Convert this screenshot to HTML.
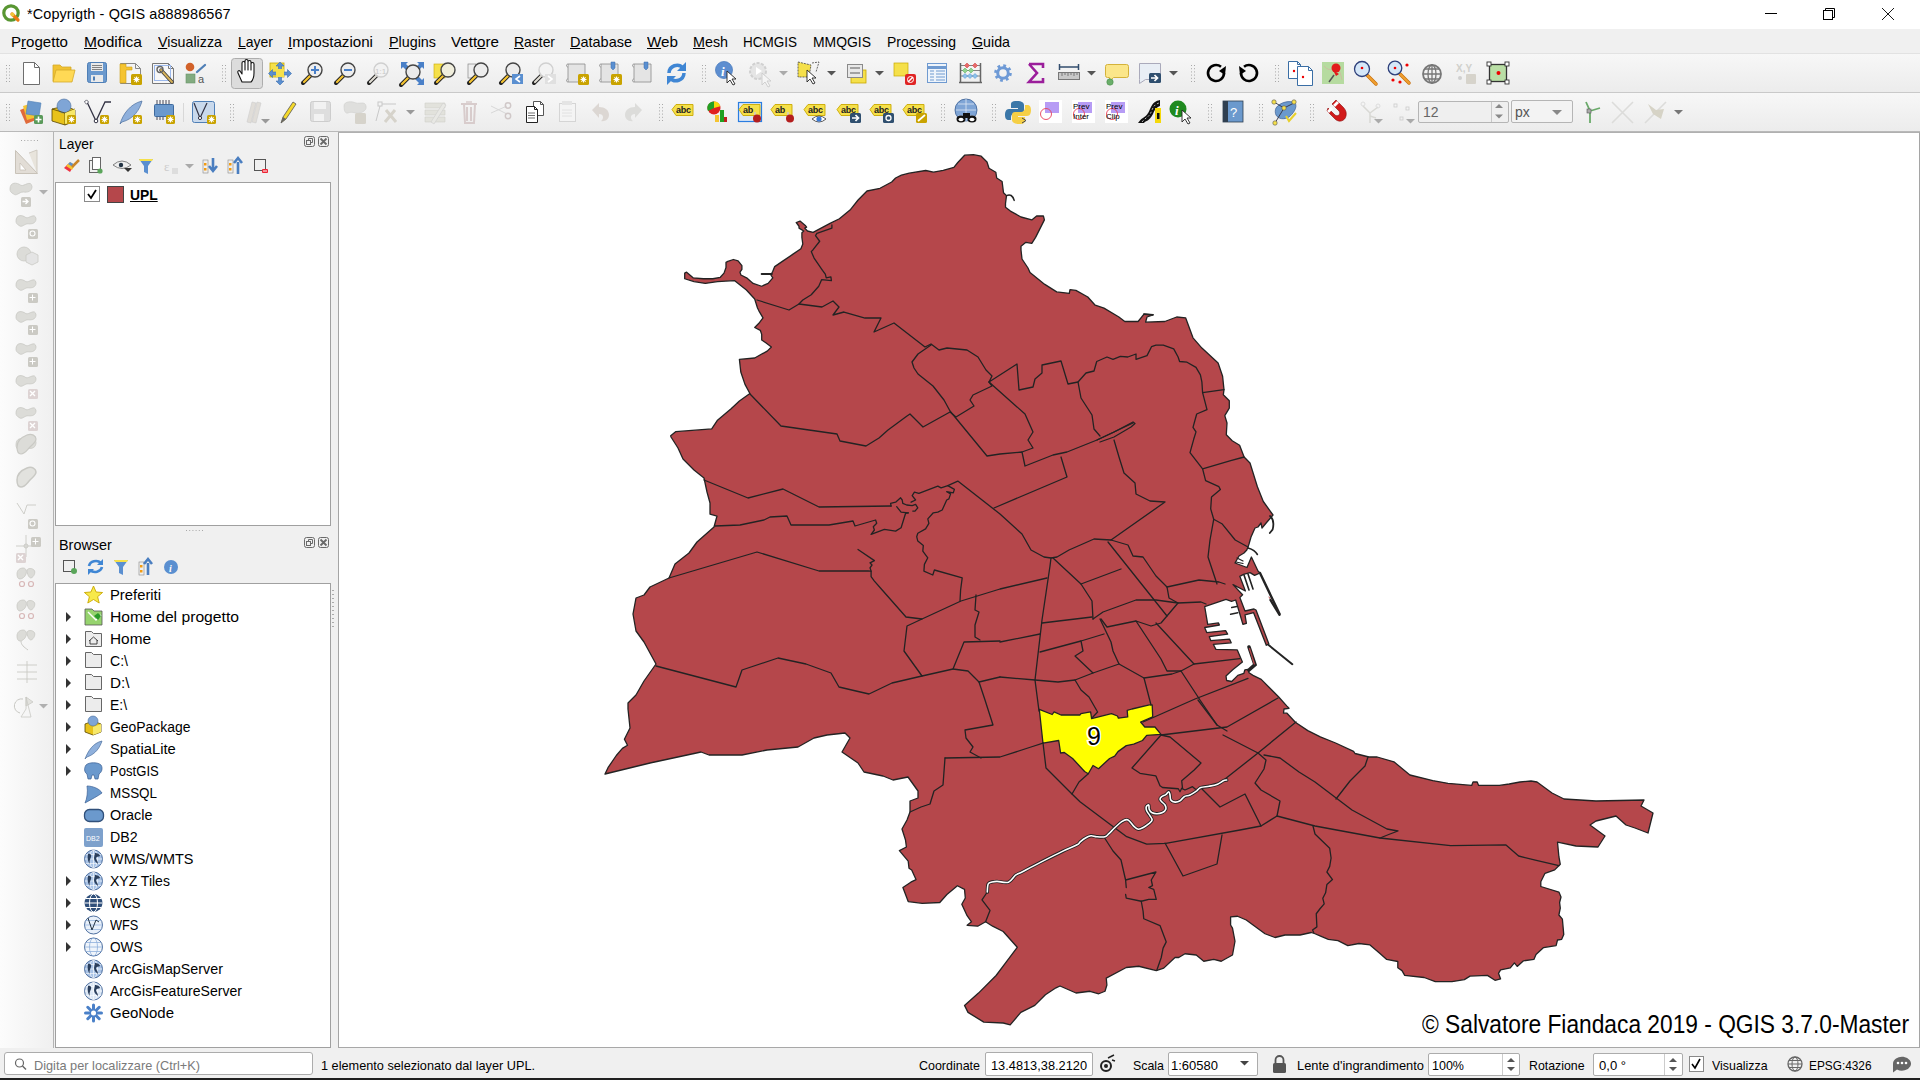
<!DOCTYPE html>
<html><head><meta charset="utf-8">
<style>
*{margin:0;padding:0;box-sizing:border-box}
html,body{width:1920px;height:1080px;overflow:hidden;background:#f0f0f0;font-family:"Liberation Sans",sans-serif;color:#000}
.abs{position:absolute}
#title{position:absolute;left:0;top:0;width:1920px;height:29px;background:#fff}
#title .t{position:absolute;left:27px;top:5px;font-size:15px;color:#000;letter-spacing:0.1px}
#menubar{position:absolute;left:0;top:29px;width:1920px;height:24px;background:#f0f0f0}
.mi{position:absolute;top:33px;font-size:15px;white-space:nowrap}
.tb{position:absolute;left:0;width:1920px;background:linear-gradient(#f7f7f7,#ececec)}
#tb1{top:53px;height:39px;border-top:1px solid #e2e2e2}
#tb2{top:92px;height:40px;border-top:1px solid #c9c9c9;border-bottom:1px solid #b9b9b9}
#ltb{position:absolute;left:0;top:132px;width:52px;height:916px;background:linear-gradient(90deg,#fcfcfc,#f0f0f0)}
#vsep{position:absolute;left:53px;top:132px;width:1px;height:916px;background:#b4b4b4}
#canvas{position:absolute;left:338px;top:132px;width:1582px;height:916px;background:#fff;border-left:1px solid #a5a5a5;border-right:1px solid #a5a5a5;border-top:1px solid #b0b0b0;border-bottom:1px solid #a8a8a8}
.map{position:absolute;left:0;top:0}
.dtitle{position:absolute;font-size:15px}
.tree{position:absolute;background:#fff;border:1px solid #a0a0a0}
.ti{position:absolute;font-size:15px;white-space:nowrap}
#status{position:absolute;left:0;top:1048px;width:1920px;height:30px;background:#f0f0f0}
#taskbar{position:absolute;left:0;top:1078px;width:1920px;height:2px;background:#202020}
.st{position:absolute;font-size:13.5px;white-space:nowrap;top:1057px}
.inp{position:absolute;background:#fff;border:1px solid #acacac;border-radius:2px}
.copy{position:absolute;left:1422px;top:1010px;font-size:25px;white-space:nowrap}
</style></head><body>
<div id="title"><div class="t" style="transform:scaleX(0.9642);transform-origin:0 0">*Copyrigth - QGIS a888986567</div></div>
<div id="menubar"></div>
<div class="tb" id="tb1"></div>
<div class="tb" id="tb2"></div>
<div id="ltb"></div>
<div id="vsep"></div>
<div id="canvas"><svg class="map" width="1581" height="915" viewBox="339 133 1581 915">
<polygon points="684.7,273.1 686.6,272.2 693.1,277.8 703.4,278.75 712.8,278.75 720.3,277.3 724,273.1 726,267.5 726,262.3 727.8,261.4 733.4,259.5 738.1,260.9 741.9,265.6 741.9,269.4 740,272.2 740.9,275 746.6,277.8 753.1,283.4 761.6,286.25 768.1,283.4 772.8,277.8 770.9,275 772.8,271.25 774.7,266.6 783.1,260.9 793.4,253.9 800.9,248.75 802.8,244 801.9,237.5 801.9,232.8 803.75,231 799,228.1 799,226.25 796.25,222.5 800,221.1 805.6,225.8 806.6,227.2 804.7,228.1 807.5,231 813.1,232.3 830,223.4 839.4,218.75 850.6,209.4 858.1,200 867,191 880,188.3 891.7,182 895.6,178 901.4,175.2 909.2,173.2 925.7,170.5 933.5,172.2 943.2,170.3 953.9,167.4 957.8,162.5 964.6,155.2 973.4,154.7 981.2,156.2 987,162 989,168.3 995.8,172.2 996.7,178 1002.1,181.5 1003.5,192.7 1006.5,195.6 1005.5,203.4 1005.5,207.3 1010.4,211.1 1021,217 1031.8,219.9 1036.6,216 1043.4,216 1044.4,219.9 1035.6,237.4 1031.8,243.3 1025.9,242.3 1021,246.2 1021,250 1022,259 1028,268 1030,272.6 1044.8,284.4 1056.7,291.9 1069.3,293.3 1070,289.6 1075.9,290.4 1087.8,297 1095.2,305.2 1104,308.1 1118.9,317 1124.8,321.5 1138.1,321.5 1144,314.1 1153,314.8 1147,317 1145.6,322.2 1164.8,321.5 1176.7,317 1185.6,317.8 1193,337.8 1201.9,348.1 1218.1,363 1222.6,376.3 1224,389.6 1223.3,394.8 1229.3,400.7 1229.3,408.1 1224.8,415.6 1227,423 1226.3,434.8 1232.2,440.7 1239.6,445.2 1244.1,457 1250,463 1257.4,486.7 1263.3,501.5 1273,515 1267,522 1262,528 1261,523 1258,527 1255,528 1251,537 1249,544 1248,547 1246.8,550 1244,553 1239,556 1235,563 1247,567.5 1251.4,557 1258,571 1260,573 1254.6,575.4 1250,572.6 1243.5,574.4 1239.8,576.3 1245.4,591 1233,584.6 1242.6,594.8 1239.8,597.6 1240.8,600 1245,611 1254,609 1256,610 1268.8,643.8 1266.3,645.3 1253.6,612.7 1245,614.8 1246.4,623.4 1242.9,624.4 1235.7,600 1231.5,601.3 1226,599.4 1204.7,606.6 1207.7,624.4 1218.4,622.9 1219.4,625 1204.7,627.5 1206.7,632.6 1225.6,630.6 1227.6,634.1 1209.3,636.7 1210.8,640.7 1229.6,639.2 1231.2,642.8 1213.3,644.3 1215.9,649.4 1237.3,649.9 1242.4,662.1 1232.7,669.8 1226,675.9 1226.6,680.5 1231.7,681.5 1237.8,675.4 1243.9,673.3 1244.9,669.8 1248,669.3 1249,672.8 1253,675.4 1261.2,679.4 1278.5,696.8 1286.7,705.9 1289,708.3 1284,709 1283.5,713.2 1287,713.2 1295.3,722.2 1307.8,730.6 1320.3,736.8 1335.6,743 1353.6,751.4 1355,753.5 1368.9,757 1377.2,757 1393.9,761.8 1409.9,775 1432.8,780.6 1448,783.3 1471.7,785.4 1473,782 1477.2,782 1478.6,785.4 1499.4,785.4 1509.2,784 1520,782 1531,781 1537,782 1552,793 1564,799 1596,801 1644,800 1641,806 1653,813 1648,833 1635,828 1626,825 1616,816 1596,821 1590,825 1605,836 1598,847 1576,846 1557.5,842.1 1558.9,856.7 1560.3,864.3 1554.7,869.9 1545,873.3 1540.8,881.7 1540.8,886.5 1558.9,892.1 1561,897 1559.6,902.5 1560.3,908 1558.9,915 1562.4,919.2 1563.75,934.4 1561.7,939.3 1557.5,940 1556.1,945.6 1543.6,947.6 1536,954.6 1533.9,959.4 1523.5,960.8 1517.2,966.4 1514.4,962.9 1510.3,967.8 1500.6,969.9 1498.5,973.3 1500.6,978.9 1495,980.3 1487.4,975.4 1470,976.1 1464.4,979.6 1452,981.7 1435.3,981.7 1424.2,977.5 1404.7,975.4 1402,970.6 1397.8,967.8 1397.8,961.5 1386.7,959.4 1379.7,953.2 1370,944.9 1358.9,943.5 1347.8,945.6 1338,940.7 1328.3,939.3 1320,935.8 1315,933.75 1311.25,932.5 1300,935 1285,935 1275,937.5 1265,933.75 1246.25,920 1237.5,916.25 1230.6,916.9 1230.6,925 1232.5,928.1 1235,941.25 1232.5,955 1221.25,961.25 1213.75,959.4 1203.75,961.25 1196.25,955 1185,953.75 1178.75,957.5 1175,957.5 1163.75,968.1 1156.25,970.6 1138.75,966.25 1126.25,967.5 1106.25,978.1 1106.9,985 1105,991.25 1098.75,993.75 1090,991.25 1076,993 1060,986 1056,987.8 1045.4,994.8 1034.8,1005.4 1020.8,1012.4 1010.2,1024.8 1003.2,1023 983.8,1022.1 968,1012.4 964.5,1005.4 978.5,993.1 996.1,975.5 1006.7,961.4 1017.25,947.3 1003.2,931.5 992.6,926.2 985.6,921.8 977.7,926.2 967.1,925.3 971.5,921.8 967.1,915.7 961.8,904.2 965.3,898 964.5,889.3 957.4,885.75 946.9,894.5 939.8,902.5 922.2,903.3 908.2,901.6 902.9,887.5 910.8,882.2 916,879.6 911.7,870 909,868.2 908.2,861.1 899.4,850.6 906.4,847 905.5,840 902,829 907,820 910,812 910,801 918,798 918,791 908,777 893,780 883,776 864,772 858,763 842,752 850,738 845,733 827,735 814,738 798,747 767,750 742,755 709,755 701,752 650,763 605,774 608,767.7 616.3,755.5 622.4,748.4 627.5,745.3 624.4,739.2 630,728 628,709 628,703 636,695 644,681 656,664 644,642 636,631 633,614 636,598 644,595 650,587 669,578 675,564 689,553 697,542 714,527 717,516 710,514 710,503 707,492 704,478 694,470 683,459 678,448 671,437 670.7,435.8 675.6,431.7 711.7,428.9 717.2,420.6 731.1,408.75 739.4,401 749.9,393.5 745,384.4 740.8,372 739.4,359.4 754.7,358 767.2,351.1 771.4,347 765.8,342.8 761.7,340 761.7,334.4 760.3,330.3 754.7,327.5 758.9,323.3 763,317.8 758.9,310.8 757.5,308 754.7,299 746.4,290 734.4,280.6 717.5,281.6 705.3,283.4 694,281.6 684.7,278.75" fill="#b5474b" stroke="#232323" stroke-width="1.3" stroke-linejoin="round"/>
<polygon points="1039.3,709.4 1052.2,714.5 1054.1,711.8 1061,715 1080,715 1080.9,713.6 1090.6,711.8 1091.6,718.7 1111.5,713.6 1117.5,716 1118.4,718.2 1127.7,716.9 1127.2,710.4 1131.9,709 1149.4,704.8 1152.2,704.8 1152.7,716.9 1140.6,722 1144.8,727 1155,727 1161,734.4 1146.7,735.4 1142.5,740.5 1133.7,744.2 1126.3,745.6 1118,751.6 1114.7,756.2 1109.6,758.5 1098.5,768.7 1093,765.5 1088.3,773.8 1084.6,771.5 1072.6,758.5 1064.3,752.5 1060.6,753 1058.7,740.5 1043,743.2" fill="#ffff00" stroke="#232323" stroke-width="1.3" stroke-linejoin="round"/>
<g fill="none" stroke="#232323" stroke-width="1.3" stroke-linejoin="round" stroke-linecap="round">
<path d="M757,300 L789,310 L799,304 L802.8,300 L811.25,294.7 L818.75,286.25 L821.6,279.7 L831.4,280.6 L830.9,276.9 L826.25,277.8 L825.3,274.1 L822.5,270.3 L814.1,258.1 L811.25,251.6 L813.1,249.7 L819.7,241.25 L815.5,235.6 L816.9,233.3 L831.9,228.1 L831.9,224.8"/>
<path d="M799,304 L822,307 L833,301 L839,307 L833,315 L844,312 L865,318 L881,318 L874,332 L894,323 L925,347 L931,344 L939,350 L947,348 L967,350 L978,357 L986,370 L992,376 L989,382 L1017,364 L1019,390 L1033,387 L1035,379 L1042,373 L1042,365 L1061,361 L1068,384 L1078,382 L1086,373 L1094,371 L1096.7,361.5 L1107,357 L1113,359.3 L1120.4,356.3 L1127.8,357 L1136,354 L1136,359.3 L1147,355.6 L1151.5,346.7 L1156,345.2 L1163.3,345.2 L1173.7,348.9 L1178.1,357 L1179.6,361.5 L1187,362.2 L1196,367.4 L1200.4,374.8 L1201.9,382.2 L1202.6,392.6 L1207,409.6 L1196.7,414 L1193,427.4 L1196,431.9 L1193.7,439.3 L1190,452.6 L1202.6,468.9 L1205.6,480.7 L1218.9,486.7 L1220.4,489.6 L1211.5,497 L1210.7,508.9 L1213.7,519.3 L1210,540 L1208,557 L1217,584"/>
<path d="M1202.6,392.6 L1224,389.6"/>
<path d="M1202.6,468.9 L1230.7,460.7 L1244.1,457"/>
<path d="M1213.7,519.3 L1221.9,523.7 L1235.2,540 L1248,547"/>
<path d="M750,394 L781,426 L837,434 L840,441 L866,446 L879,438 L888,430 L907,416 L910,414 L923,427 L950,412 L956,417 L974,406 L970,400 L973,395 L992,386 L989,382"/>
<path d="M989,382 L1025,414 L1033,432 L1028,440 L1033,448 L1022,452"/>
<path d="M931,345 L918,354 L912,362 L914,368 L918,374 L933,386 L944,400 L950,411 L987,456 L1000,454 L1022,452 L1025,466 L1053,455 L1067,452 L1097,440 L1114,432 L1133,423"/>
<path d="M1097,440 L1114,432 L1133,422 L1135,423.5 L1131,427 L1114,437 L1100,442"/>
<path d="M1114,440 L1119,457 L1124,473 L1135,483 L1136,494 L1150,501 L1165,502 L1111,540"/>
<path d="M1051,558 L1057,557 L1069,550 L1094,539 L1111,540 L1128,545 L1133,556 L1143,557 L1156,576 L1167,587 L1169,598 L1178,603 L1201,602 L1206,604"/>
<path d="M1053,558 L1081,584 L1092,601 L1093,619"/>
<path d="M1108,542 L1167,616"/>
<path d="M1167,587 L1199,580 L1219,582 L1225,584"/>
<path d="M1061,457 L1067,477 L994,508"/>
<path d="M1081,584 L1121,569"/>
<path d="M1093,619 L1103,612 L1136,600 L1156,600 L1178,603 L1161,623 L1151,626 L1136,621 L1107,627 L1101,619"/>
<path d="M1042,623 L1092,617"/>
<path d="M1000,642 L1040,634"/>
<path d="M1040,652 L1081,641 L1104,634"/>
<path d="M1100,619 L1111,642 L1113,651 L1119,664 L1144,678 L1151,705"/>
<path d="M1081,641 L1083,651 L1075,656 L1093,673 L1119,664"/>
<path d="M1136,621 L1161,659 L1167,671 L1181,671 L1194,664 L1239.8,658.6"/>
<path d="M1156,623 L1194,664"/>
<path d="M1000,677 L1035,680 L1058,682 L1075,680 L1093,673"/>
<path d="M1075,680 L1081,690 L1089,697 L1097.6,712 L1092,718"/>
<path d="M1144,678 L1172,674 L1181,671"/>
<path d="M1181,671 L1200,700 L1217,725 L1227,731"/>
<path d="M1248,678.4 L1195,699 L1143,722"/>
<path d="M1278,698 L1227,727 L1161,735"/>
<path d="M1078,382 L1081,398 L1092,415 L1094,429 L1100,436"/>
<path d="M704,480 L748,498 L783,489 L819,507 L891,506"/>
<path d="M715,526 L740,525 L764,520 L770,517 L787,516 L791,525 L829,525 L853,521 L855,526 L875.6,520 L876.7,523.3 L873.3,526.7 L874.4,530 L871.1,534.4 L884.4,529.4 L895.6,531.1 L901.1,527.8 L905.6,513.3 L908.3,512.8"/>
<path d="M891.1,506.1 L890.6,503.3 L895.6,502.2 L900.6,497.8 L902.2,500 L902.8,503.3 L906.7,505 L912.2,505.6 L915.6,504.4 L917.8,507.8 L915,511.1 L912.8,511.1"/>
<path d="M896.7,506.7 L901.1,512.2 L908.3,512.8"/>
<path d="M911.1,502.2 L915.6,500 L912.2,495.6 L914.4,492.2 L918.9,493.3 L937.8,486.1 L941.1,487.8 L947.8,485.6 L954.4,489.4 L953.3,492.8 L946.7,491.7 L950.6,493.9 L948.9,498.9 L946.7,500 L942.2,510 L937.8,512.2 L933.3,512.8 L927.8,518.9 L928.9,523.3 L925.6,528.9 L917.8,533.3 L916.7,536.7 L917.8,541.1 L923.3,545.6 L922.8,551.1 L927.8,557.8 L924.4,564.4 L923.9,571.1 L932.8,575 L934.4,570 L962.2,577.8 L960.6,590 L960,601"/>
<path d="M947.8,485.6 L957.8,481.1 L1000,514 L1022,534 L1031,550 L1044,557 L1051,558 L1050,566 L1042,620 L1035,680 L1039,711"/>
<path d="M669,578 L757,552 L819,571 L868,571 L871.1,571.1 L871.1,576.7 L874.4,581.1 L882.2,590 L906,617 L922,619 L961,601 L1000,589 L1047,578"/>
<path d="M858,549.5 L874.4,560.6 L870,562.8 L872,565 L870,567.8 L871.1,571.1"/>
<path d="M922,619 L907,626 L904,651 L922,676 L953,669 L964,642 L1000,641"/>
<path d="M976,595 L975,610 L979,612 L975,625 L975,637 L980,640"/>
<path d="M656,666 L736,687 L742,670 L778,658 L806,664 L831,673 L839,687 L856,691 L869,694 L892,683 L922,676"/>
<path d="M953,669 L968,671 L979,682 L1000,677"/>
<path d="M979,682 L985,700 L993,725 L965,730 L966,738 L973,747 L970,752 L981,758"/>
<path d="M945,758 L1000,757 L1031,747 L1043,743.2"/>
<path d="M945,758 L943,785 L934,791 L930,804 L921,807 L910,812"/>
<path d="M1043,743 L1046,768 L1072,794 L1080,801.7 L1113.3,826.7 L1126.7,836.7 L1146.7,844.2 L1165.8,843.3 L1240,830 L1261,826 L1277,816 L1315,826 L1380,838 L1450.6,845.6 L1506,844.9 L1518.6,856 L1535.3,860.1 L1558.9,865.7"/>
<path d="M1072,794 L1079,782 L1088,774"/>
<path d="M1161,735 L1170,737 L1201,763 L1194.2,770 L1181.7,780.8 L1182.5,788.3"/>
<path d="M1161,735 L1132,768 L1140,773.3 L1155.8,775.8 L1160,785.8 L1162.5,787.5 L1178.3,788.75 L1180,791.7 L1181.7,788.3 L1185,790 L1192.5,786.7 L1195.8,789.6 L1201,788"/>
<path d="M1198,700 L1217,725"/>
<path d="M1223,735 L1258,753 L1266,760 L1264,769 L1255,783 L1261,790 L1280,801 L1277,816"/>
<path d="M1296,722 L1258,753 L1225,779"/>
<path d="M1264,755 L1280,758 L1299,772 L1315,782 L1352,810 L1387,829 L1398,831 L1390,834 L1380,838"/>
<path d="M1368,757 L1365,766 L1350,781 L1336,799"/>
<path d="M1201,788 L1220,807 L1245,794 L1261,826"/>
<path d="M1313,826 L1315,834 L1329.7,848.3 L1331.1,858 L1329.7,866.4 L1326.9,872 L1332.5,879.6 L1326.9,884.4 L1325.6,892.8 L1322.8,898.3 L1324.2,903.9 L1320,908.75 L1316.25,913.75 L1316.9,926.9 L1312.5,930 L1313.75,932.5"/>
<path d="M1104,837 L1113,851 L1121,860 L1125.6,880 L1126.25,887.5"/>
<path d="M1125.6,894.4 L1126.25,898.1 L1141.25,901.25 L1148.75,899.4 L1156.25,899.4 L1153.75,889.4 L1148.75,887.5 L1152.5,885.6 L1151.25,880 L1156,872 L1125.6,880"/>
<path d="M1141.25,901.25 L1143.1,911.25 L1143.75,918.75 L1160,925.6 L1166.25,941.9 L1163.1,948.1 L1161.25,957.5 L1156.9,970"/>
<path d="M987.3,892 L982,899.8 L990,910.4 L985.6,921.8"/>
<path d="M1165,843 L1183,876 L1217,864 L1222,835"/>
</g>
<path d="M987.3,892 C987.4,890.7 987.4,885.7 988.2,884 C989.0,882.3 990.5,882.4 992,882 C993.5,881.6 994.2,881.4 997,881.4 C999.8,881.4 1005.4,883.2 1008.5,882.2 C1011.6,881.2 1013.2,877.0 1015.5,875.2 C1017.8,873.5 1018.3,873.9 1022.5,871.7 C1026.7,869.5 1034.2,865.5 1040.9,862.1 C1047.6,858.7 1056.9,854.0 1062.9,851.1 C1068.9,848.2 1074.2,846.3 1077.1,844.8 C1079.9,843.3 1078.7,843.2 1080,842.1 C1081.3,841.0 1083.2,839.3 1085,838.3 C1086.8,837.2 1088.8,836.1 1090.8,835.8 C1092.8,835.5 1094.3,836.6 1096.7,836.7 C1099.1,836.9 1102.9,837.3 1105,836.7 C1107.1,836.1 1107.5,834.8 1109.2,833.3 C1110.9,831.8 1112.9,829.4 1115,827.5 C1117.1,825.6 1119.8,823.0 1121.7,821.7 C1123.7,820.4 1125.3,819.6 1126.7,819.6 C1128.1,819.6 1128.8,820.5 1130,821.7 C1131.2,822.9 1132.8,825.5 1134.2,826.7 C1135.6,828.0 1136.8,829.1 1138.3,829.2 C1139.8,829.3 1141.5,828.5 1143.3,827.5 C1145.1,826.5 1147.7,824.5 1149.2,823.3 C1150.7,822.0 1152.0,821.2 1152.1,820 C1152.2,818.8 1150.9,817.3 1150,815.8 C1149.1,814.3 1147.3,812.3 1146.7,810.8 C1146.1,809.3 1146.0,807.7 1146.3,806.7 C1146.6,805.7 1148.3,804.6 1148.8,805 C1149.3,805.4 1148.7,808.0 1149.2,809.2 C1149.7,810.5 1150.5,811.7 1151.7,812.5 C1153.0,813.3 1154.9,813.8 1156.7,813.75 C1158.5,813.8 1161.0,813.3 1162.5,812.5 C1164.0,811.7 1165.4,810.5 1165.8,809.2 C1166.2,808.0 1165.7,806.2 1165,805 C1164.3,803.8 1162.5,802.7 1161.7,801.7 C1160.9,800.7 1160.0,800.0 1160,799.2 C1160.0,798.4 1160.7,797.5 1161.7,796.7 C1162.7,795.9 1164.6,795.4 1165.8,794.6 C1167.0,793.8 1168.0,791.6 1168.75,791.7 C1169.5,791.8 1169.7,793.6 1170,795 C1170.3,796.4 1170.0,798.8 1170.8,800 C1171.6,801.2 1173.5,802.0 1175,802.1 C1176.5,802.2 1178.5,801.7 1180,800.8 C1181.5,799.9 1182.5,797.7 1184.2,796.7 C1185.9,795.7 1187.9,796.0 1190,795 C1192.1,794.0 1194.9,792.0 1196.7,790.8 C1198.5,789.5 1198.7,788.3 1200.8,787.5 C1202.9,786.7 1206.4,786.8 1209.2,786.25 C1212.0,785.7 1215.2,785.1 1217.5,784.2 C1219.8,783.3 1221.8,781.5 1223.3,780.8 C1224.8,780.1 1226.1,780.1 1226.7,780" fill="none" stroke="#232323" stroke-width="3.4" stroke-linejoin="round" stroke-linecap="round"/>
<path d="M987.3,892 C987.4,890.7 987.4,885.7 988.2,884 C989.0,882.3 990.5,882.4 992,882 C993.5,881.6 994.2,881.4 997,881.4 C999.8,881.4 1005.4,883.2 1008.5,882.2 C1011.6,881.2 1013.2,877.0 1015.5,875.2 C1017.8,873.5 1018.3,873.9 1022.5,871.7 C1026.7,869.5 1034.2,865.5 1040.9,862.1 C1047.6,858.7 1056.9,854.0 1062.9,851.1 C1068.9,848.2 1074.2,846.3 1077.1,844.8 C1079.9,843.3 1078.7,843.2 1080,842.1 C1081.3,841.0 1083.2,839.3 1085,838.3 C1086.8,837.2 1088.8,836.1 1090.8,835.8 C1092.8,835.5 1094.3,836.6 1096.7,836.7 C1099.1,836.9 1102.9,837.3 1105,836.7 C1107.1,836.1 1107.5,834.8 1109.2,833.3 C1110.9,831.8 1112.9,829.4 1115,827.5 C1117.1,825.6 1119.8,823.0 1121.7,821.7 C1123.7,820.4 1125.3,819.6 1126.7,819.6 C1128.1,819.6 1128.8,820.5 1130,821.7 C1131.2,822.9 1132.8,825.5 1134.2,826.7 C1135.6,828.0 1136.8,829.1 1138.3,829.2 C1139.8,829.3 1141.5,828.5 1143.3,827.5 C1145.1,826.5 1147.7,824.5 1149.2,823.3 C1150.7,822.0 1152.0,821.2 1152.1,820 C1152.2,818.8 1150.9,817.3 1150,815.8 C1149.1,814.3 1147.3,812.3 1146.7,810.8 C1146.1,809.3 1146.0,807.7 1146.3,806.7 C1146.6,805.7 1148.3,804.6 1148.8,805 C1149.3,805.4 1148.7,808.0 1149.2,809.2 C1149.7,810.5 1150.5,811.7 1151.7,812.5 C1153.0,813.3 1154.9,813.8 1156.7,813.75 C1158.5,813.8 1161.0,813.3 1162.5,812.5 C1164.0,811.7 1165.4,810.5 1165.8,809.2 C1166.2,808.0 1165.7,806.2 1165,805 C1164.3,803.8 1162.5,802.7 1161.7,801.7 C1160.9,800.7 1160.0,800.0 1160,799.2 C1160.0,798.4 1160.7,797.5 1161.7,796.7 C1162.7,795.9 1164.6,795.4 1165.8,794.6 C1167.0,793.8 1168.0,791.6 1168.75,791.7 C1169.5,791.8 1169.7,793.6 1170,795 C1170.3,796.4 1170.0,798.8 1170.8,800 C1171.6,801.2 1173.5,802.0 1175,802.1 C1176.5,802.2 1178.5,801.7 1180,800.8 C1181.5,799.9 1182.5,797.7 1184.2,796.7 C1185.9,795.7 1187.9,796.0 1190,795 C1192.1,794.0 1194.9,792.0 1196.7,790.8 C1198.5,789.5 1198.7,788.3 1200.8,787.5 C1202.9,786.7 1206.4,786.8 1209.2,786.25 C1212.0,785.7 1215.2,785.1 1217.5,784.2 C1219.8,783.3 1221.8,781.5 1223.3,780.8 C1224.8,780.1 1226.1,780.1 1226.7,780" fill="none" stroke="#ffffff" stroke-width="1.6" stroke-linejoin="round" stroke-linecap="round"/>
<g fill="none" stroke-linecap="round">
<path d="M1249,647 L1255,664.7 L1249,670" stroke="#232323" stroke-width="3.6"/>
<path d="M1249.5,648.5 L1254.3,664" stroke="#b5474b" stroke-width="1.3"/>
<path d="M1268.3,644.8 L1292.3,664.2" stroke="#232323" stroke-width="2"/>
<path d="M1260,573 L1279.6,614" stroke="#232323" stroke-width="2.4"/>
<path d="M1269,597 L1278.8,613" stroke="#b5474b" stroke-width="0.9"/>
<path d="M1270.4,600 L1279.5,614.8" stroke="#232323" stroke-width="2.2"/>
<path d="M1244,575 L1249,590 M1248,574 L1253,589" stroke="#232323" stroke-width="1.6"/>
<path d="M1231.7,607.6 L1236.8,606.6 M1230.6,614.3 L1237.8,612.7" stroke="#232323" stroke-width="1.5"/>
<path d="M1237,558 L1243,561 M1236,562 L1243,563.5" stroke="#232323" stroke-width="1.2"/>
<path d="M1248,548 Q1255,550 1257.4,554.5" stroke="#232323" stroke-width="1.6"/>
<path d="M1006.5,195.6 Q1012,193 1014.2,200.4" stroke="#232323" stroke-width="1.5"/>
<path d="M761.6,274 L771.9,274" stroke="#232323" stroke-width="1.8"/>
<path d="M1144,314.1 L1153,314.8" stroke="#232323" stroke-width="1.8"/>
<path d="M1270,516 Q1275,520 1272.6,529.6 L1269.8,533" stroke="#232323" stroke-width="1.8"/>
</g>
<text x="1094" y="745" font-family="Liberation Sans, sans-serif" font-size="25" text-anchor="middle" fill="#000" stroke="#fff" stroke-width="3" paint-order="stroke">9</text>
</svg></div>
<div class="copy" style="transform:scaleX(0.9097);transform-origin:0 0">© Salvatore Fiandaca 2019 - QGIS 3.7.0-Master</div>
<div id="status"></div>
<div id="taskbar"></div>
<div class="mi" style="left:11px;transform:scaleX(1.005);transform-origin:0 0">P<u>r</u>ogetto</div><div class="mi" style="left:84px;transform:scaleX(1.038);transform-origin:0 0"><u>M</u>odifica</div><div class="mi" style="left:158px;transform:scaleX(0.951);transform-origin:0 0"><u>V</u>isualizza</div><div class="mi" style="left:238px;transform:scaleX(0.933);transform-origin:0 0"><u>L</u>ayer</div><div class="mi" style="left:288px;transform:scaleX(1.009);transform-origin:0 0"><u>I</u>mpostazioni</div><div class="mi" style="left:389px;transform:scaleX(0.955);transform-origin:0 0"><u>P</u>lugins</div><div class="mi" style="left:451px;transform:scaleX(1.010);transform-origin:0 0">Vett<u>o</u>re</div><div class="mi" style="left:514px;transform:scaleX(0.928);transform-origin:0 0"><u>R</u>aster</div><div class="mi" style="left:570px;transform:scaleX(0.965);transform-origin:0 0"><u>D</u>atabase</div><div class="mi" style="left:647px;transform:scaleX(1.014);transform-origin:0 0"><u>W</u>eb</div><div class="mi" style="left:693px;transform:scaleX(0.954);transform-origin:0 0"><u>M</u>esh</div><div class="mi" style="left:743px;transform:scaleX(0.900);transform-origin:0 0">HCMGIS</div><div class="mi" style="left:813px;transform:scaleX(0.928);transform-origin:0 0">MMQGIS</div><div class="mi" style="left:887px;transform:scaleX(0.930);transform-origin:0 0">Pro<u>c</u>essing</div><div class="mi" style="left:972px;transform:scaleX(0.949);transform-origin:0 0"><u>G</u>uida</div>

<div class="tree" style="left:55px;top:182px;width:276px;height:344px"></div>
<div class="tree" style="left:55px;top:583px;width:276px;height:465px"></div>
<div class="abs" style="left:332px;top:590px;width:2px;height:40px;background:repeating-linear-gradient(#aaa 0 1px,transparent 1px 4px)"></div>
<div class="abs" style="left:110px;top:585.5px;font-size:15.5px;white-space:pre;color:#000;transform:scaleX(0.9549);transform-origin:0 0;">Preferiti</div><div class="abs" style="left:110px;top:607.5px;font-size:15.5px;white-space:pre;color:#000;transform:scaleX(1.0115);transform-origin:0 0;">Home del progetto</div><div class="abs" style="left:110px;top:629.5px;font-size:15.5px;white-space:pre;color:#000;transform:scaleX(0.9913);transform-origin:0 0;">Home</div><div class="abs" style="left:110px;top:651.5px;font-size:15.5px;white-space:pre;color:#000;transform:scaleX(0.9085);transform-origin:0 0;">C:\</div><div class="abs" style="left:110px;top:673.5px;font-size:15.5px;white-space:pre;color:#000;transform:scaleX(0.9842);transform-origin:0 0;">D:\</div><div class="abs" style="left:110px;top:695.5px;font-size:15.5px;white-space:pre;color:#000;transform:scaleX(0.8969);transform-origin:0 0;">E:\</div><div class="abs" style="left:110px;top:717.5px;font-size:15.5px;white-space:pre;color:#000;transform:scaleX(0.8982);transform-origin:0 0;">GeoPackage</div><div class="abs" style="left:110px;top:739.5px;font-size:15.5px;white-space:pre;color:#000;transform:scaleX(0.9535);transform-origin:0 0;">SpatiaLite</div><div class="abs" style="left:110px;top:761.5px;font-size:15.5px;white-space:pre;color:#000;transform:scaleX(0.8446);transform-origin:0 0;">PostGIS</div><div class="abs" style="left:110px;top:783.5px;font-size:15.5px;white-space:pre;color:#000;transform:scaleX(0.8661);transform-origin:0 0;">MSSQL</div><div class="abs" style="left:110px;top:805.5px;font-size:15.5px;white-space:pre;color:#000;transform:scaleX(0.9287);transform-origin:0 0;">Oracle</div><div class="abs" style="left:110px;top:827.5px;font-size:15.5px;white-space:pre;color:#000;transform:scaleX(0.9152);transform-origin:0 0;">DB2</div><div class="abs" style="left:110px;top:849.5px;font-size:15.5px;white-space:pre;color:#000;transform:scaleX(0.9325);transform-origin:0 0;">WMS/WMTS</div><div class="abs" style="left:110px;top:871.5px;font-size:15.5px;white-space:pre;color:#000;transform:scaleX(0.9031);transform-origin:0 0;">XYZ Tiles</div><div class="abs" style="left:110px;top:893.5px;font-size:15.5px;white-space:pre;color:#000;transform:scaleX(0.8377);transform-origin:0 0;">WCS</div><div class="abs" style="left:110px;top:915.5px;font-size:15.5px;white-space:pre;color:#000;transform:scaleX(0.8247);transform-origin:0 0;">WFS</div><div class="abs" style="left:110px;top:937.5px;font-size:15.5px;white-space:pre;color:#000;transform:scaleX(0.8776);transform-origin:0 0;">OWS</div><div class="abs" style="left:110px;top:959.5px;font-size:15.5px;white-space:pre;color:#000;transform:scaleX(0.9239);transform-origin:0 0;">ArcGisMapServer</div><div class="abs" style="left:110px;top:981.5px;font-size:15.5px;white-space:pre;color:#000;transform:scaleX(0.9067);transform-origin:0 0;">ArcGisFeatureServer</div><div class="abs" style="left:110px;top:1003.5px;font-size:15.5px;white-space:pre;color:#000;transform:scaleX(0.9644);transform-origin:0 0;">GeoNode</div><div class="abs" style="left:59.3px;top:134.5px;font-size:15px;white-space:pre;color:#000;transform:scaleX(0.9219);transform-origin:0 0;">Layer</div><div class="abs" style="left:59px;top:535.5px;font-size:15px;white-space:pre;color:#000;transform:scaleX(0.9588);transform-origin:0 0;">Browser</div><div class="abs" style="left:130.2px;top:185.5px;font-size:15px;white-space:pre;color:#000;font-weight:bold;transform:scaleX(0.9233);transform-origin:0 0;text-decoration:underline">UPL</div>

<div class="inp" style="left:4px;top:1052px;width:309px;height:23px;border-radius:3px"></div>
<div class="inp" style="left:985px;top:1052px;width:108px;height:24px"></div>
<div class="inp" style="left:1168px;top:1052px;width:90px;height:24px"></div>
<div class="inp" style="left:1428px;top:1053px;width:92px;height:23px"></div>
<div class="abs" style="left:1502px;top:1054px;width:1px;height:21px;background:#ccc"></div>
<div class="inp" style="left:1593px;top:1053px;width:90px;height:23px"></div>
<div class="abs" style="left:1664px;top:1054px;width:1px;height:21px;background:#ccc"></div>
<div class="inp" style="left:1418px;top:101px;width:91px;height:22px;background:#efefef;border-color:#b5b5b5"></div>
<div class="abs" style="left:1491px;top:102px;width:1px;height:20px;background:#c8c8c8"></div>
<div class="inp" style="left:1511px;top:100px;width:62px;height:23px;background:#f3f3f3;border-color:#b5b5b5"></div>
<div class="abs" style="left:33.5px;top:1058px;font-size:13.5px;white-space:pre;color:#7a7a7a;transform:scaleX(0.9435);transform-origin:0 0;">Digita per localizzare (Ctrl+K)</div><div class="abs" style="left:321px;top:1058px;font-size:13.5px;white-space:pre;color:#000;transform:scaleX(0.9411);transform-origin:0 0;">1 elemento selezionato dal layer UPL.</div><div class="abs" style="left:919px;top:1058px;font-size:13.5px;white-space:pre;color:#000;transform:scaleX(0.9236);transform-origin:0 0;">Coordinate</div><div class="abs" style="left:991px;top:1058px;font-size:13.5px;white-space:pre;color:#000;transform:scaleX(0.9471);transform-origin:0 0;">13.4813,38.2120</div><div class="abs" style="left:1133px;top:1058px;font-size:13.5px;white-space:pre;color:#000;transform:scaleX(0.9177);transform-origin:0 0;">Scala</div><div class="abs" style="left:1170.5px;top:1058px;font-size:13.5px;white-space:pre;color:#000;transform:scaleX(0.9629);transform-origin:0 0;">1:60580</div><div class="abs" style="left:1296.5px;top:1058px;font-size:13.5px;white-space:pre;color:#000;transform:scaleX(0.9535);transform-origin:0 0;">Lente d'ingrandimento</div><div class="abs" style="left:1432px;top:1058px;font-size:13.5px;white-space:pre;color:#000;transform:scaleX(0.9267);transform-origin:0 0;">100%</div><div class="abs" style="left:1529.3px;top:1058px;font-size:13.5px;white-space:pre;color:#000;transform:scaleX(0.9129);transform-origin:0 0;">Rotazione</div><div class="abs" style="left:1599px;top:1058px;font-size:13.5px;white-space:pre;color:#000;transform:scaleX(0.9670);transform-origin:0 0;">0,0 °</div><div class="abs" style="left:1712px;top:1058px;font-size:13.5px;white-space:pre;color:#000;transform:scaleX(0.9183);transform-origin:0 0;">Visualizza</div><div class="abs" style="left:1809px;top:1058px;font-size:13.5px;white-space:pre;color:#000;transform:scaleX(0.8766);transform-origin:0 0;">EPSG:4326</div><div class="abs" style="left:1423px;top:104px;font-size:14px;white-space:pre;color:#666;transform:scaleX(1.0000);transform-origin:0 0;">12</div><div class="abs" style="left:1515px;top:104px;font-size:14px;white-space:pre;color:#555;transform:scaleX(1.0000);transform-origin:0 0;">px</div>
<svg style="position:absolute;left:0;top:0;z-index:5" width="1920" height="1080"><circle cx="11" cy="13" r="7.2" fill="none" stroke="#589632" stroke-width="3.2"/><path d="M12,14 l6,6" stroke="#ee7913" stroke-width="3.2" stroke-linecap="round"/><circle cx="12.5" cy="14.5" r="2" fill="#f0c43a"/><path d="M1765,13.5 h12" stroke="#000" stroke-width="1"/><rect x="1823.5" y="10.5" width="9" height="9" fill="none" stroke="#000" stroke-width="1"/><path d="M1825.5,10.5 v-2 h9 v9 h-2" fill="none" stroke="#000" stroke-width="1"/><path d="M1882,8 l12,12 M1894,8 l-12,12" stroke="#000" stroke-width="0.9"/><rect x="6" y="65.0" width="1" height="1" fill="#a8a8a8"/><rect x="9" y="65.0" width="1" height="1" fill="#a8a8a8"/><rect x="6" y="68.2" width="1" height="1" fill="#a8a8a8"/><rect x="9" y="68.2" width="1" height="1" fill="#a8a8a8"/><rect x="6" y="71.4" width="1" height="1" fill="#a8a8a8"/><rect x="9" y="71.4" width="1" height="1" fill="#a8a8a8"/><rect x="6" y="74.6" width="1" height="1" fill="#a8a8a8"/><rect x="9" y="74.6" width="1" height="1" fill="#a8a8a8"/><rect x="6" y="77.8" width="1" height="1" fill="#a8a8a8"/><rect x="9" y="77.8" width="1" height="1" fill="#a8a8a8"/><rect x="6" y="81.0" width="1" height="1" fill="#a8a8a8"/><rect x="9" y="81.0" width="1" height="1" fill="#a8a8a8"/><path d="M23.5,62.5 h11 l5,5 v17 h-16 z" fill="#fff" stroke="#6e6e6e" stroke-width="1"/><path d="M34.5,62.5 v5 h5" fill="none" stroke="#6e6e6e" stroke-width="1"/><path d="M53,65 h7 l2,2 h9 v14 h-18 z" fill="#f1c232" stroke="#d4a92a" stroke-width="0.8"/><path d="M56,70 h19 l-3,12 h-19 z" fill="#ffd955" stroke="#d4a92a" stroke-width="0.8"/><rect x="87.5" y="62.5" width="19" height="20" rx="2" fill="#6b99cd" stroke="#4f7fb6"/><rect x="91" y="63" width="12" height="8" fill="#eaeaea"/><path d="M92,65.5 h10 M92,67.5 h10 M92,69.5 h10" stroke="#555" stroke-width="0.7"/><rect x="91" y="75" width="12" height="7" fill="#eaeaea"/><rect x="93" y="76.5" width="2" height="4" fill="#4f7fb6"/><path d="M120.5,63.5 h15 l5,5 v15 h-20 z" fill="#f4f4f4" stroke="#888" stroke-width="1"/><path d="M135.5,63.5 v5 h5" fill="none" stroke="#888" stroke-width="1"/><path d="M120,64 h6 v3 h6 v3 h-6 v13 h-6 z" fill="#f5c431" stroke="#c99f1a" stroke-width="0.6"/><rect x="131" y="74" width="11" height="11" rx="1.5" fill="#c9a300"/><path d="M136.5,76.5 v6 M133.5,79.5 h6 M134.4,77.4 l4.2,4.2 M134.4,81.6 l4.2,-4.2" stroke="#fff" stroke-width="1.1"/><path d="M152.5,63.5 h16 l5,5 v15 h-21 z" fill="#f7f7f7" stroke="#777" stroke-width="1"/><path d="M168.5,63.5 v5 h5" fill="none" stroke="#777" stroke-width="1"/><rect x="154.5" y="65.5" width="16" height="15" fill="none" stroke="#9bb8ec" stroke-width="1"/><path d="M161,70 l11,12" stroke="#333" stroke-width="3.4" stroke-linecap="round"/><path d="M161,70 l11,12" stroke="#d6b25a" stroke-width="2" stroke-linecap="round"/><circle cx="160" cy="69.5" r="3" fill="none" stroke="#666" stroke-width="1.4"/><circle cx="190" cy="67" r="4.3" fill="#d2622a"/><path d="M197,72 l8,-7" stroke="#4f7fb6" stroke-width="2.3" stroke-linecap="round"/><rect x="186" y="74" width="9" height="9" fill="#82ab80" stroke="#6a9468" stroke-width="0.6"/><text x="198" y="83" font-family="Liberation Sans" font-size="11" fill="#555">a</text><rect x="222" y="65.0" width="1" height="1" fill="#a8a8a8"/><rect x="225" y="65.0" width="1" height="1" fill="#a8a8a8"/><rect x="222" y="68.2" width="1" height="1" fill="#a8a8a8"/><rect x="225" y="68.2" width="1" height="1" fill="#a8a8a8"/><rect x="222" y="71.4" width="1" height="1" fill="#a8a8a8"/><rect x="225" y="71.4" width="1" height="1" fill="#a8a8a8"/><rect x="222" y="74.6" width="1" height="1" fill="#a8a8a8"/><rect x="225" y="74.6" width="1" height="1" fill="#a8a8a8"/><rect x="222" y="77.8" width="1" height="1" fill="#a8a8a8"/><rect x="225" y="77.8" width="1" height="1" fill="#a8a8a8"/><rect x="222" y="81.0" width="1" height="1" fill="#a8a8a8"/><rect x="225" y="81.0" width="1" height="1" fill="#a8a8a8"/><rect x="231.5" y="58.5" width="31" height="30" rx="3" fill="#dcdcdc" stroke="#adadad"/><path d="M242,82 l-4,-9 c-1,-2 1,-3 2,-2 l2,3 v-11 c0,-2 3,-2 3,0 v7 v-9 c0,-2 3,-2 3,0 v9 v-8 c0,-2 3,-2 3,0 v8 v-6 c0,-2 3,-2 3,0 v9 c0,4 -1,7 -3,9 z" fill="#fff" stroke="#111" stroke-width="1.1" stroke-linejoin="round"/><rect x="270" y="63" width="14" height="14" fill="#f5e04a" stroke="#c9a800" stroke-width="0.8"/><path d="M280,62 l4,4 h-2.5 v6 h6 v-2.5 l4,4 -4,4 v-2.5 h-6 v6 h2.5 l-4,4 -4,-4 h2.5 v-6 h-6 v2.5 l-4,-4 4,-4 v2.5 h6 v-6 h-2.5 z" fill="#5a8fd0" stroke="#3d6fae" stroke-width="0.6"/><rect x="276" y="69" width="8" height="8" fill="#f5e04a"/><path d="M311,75 L303,83" stroke="#222" stroke-width="4" stroke-linecap="round"/><path d="M310,76 L304,82" stroke="#f5c431" stroke-width="2.2" stroke-linecap="round"/><circle cx="315" cy="70" r="7" fill="#eee" stroke="#444" stroke-width="1.4"/><path d="M311,70 h8 M315,66 v8" stroke="#4a80c8" stroke-width="2"/><path d="M344,75 L336,83" stroke="#222" stroke-width="4" stroke-linecap="round"/><path d="M343,76 L337,82" stroke="#f5c431" stroke-width="2.2" stroke-linecap="round"/><circle cx="348" cy="70" r="7" fill="#eee" stroke="#444" stroke-width="1.4"/><path d="M344,70 h8" stroke="#4a80c8" stroke-width="2"/><path d="M377,75 L369,83" stroke="#222" stroke-width="4" stroke-linecap="round"/><path d="M376,76 L370,82" stroke="#e0ddd4" stroke-width="2.2" stroke-linecap="round"/><circle cx="381" cy="70" r="7" fill="#f2f2f2" stroke="#cfcfcf" stroke-width="1.4"/><text x="375" y="74" font-family="Liberation Sans" font-size="8" fill="#c8c8c8">1:1</text><path d="M401,62 h7 l-2,2 4,4 -3,3 -4,-4 -2,2 z M424,62 h-7 l2,2 -4,4 3,3 4,-4 2,2 z M424,85 h-7 l2,-2 -4,-4 3,-3 4,4 2,-2 z" fill="#4a80c8"/><path d="M409,77 L401,85" stroke="#222" stroke-width="4" stroke-linecap="round"/><path d="M408,78 L402,84" stroke="#f5c431" stroke-width="2.2" stroke-linecap="round"/><circle cx="413" cy="72" r="7" fill="#eaeaea" stroke="#444" stroke-width="1.4"/><rect x="434" y="64" width="11" height="14" fill="#f5e04a" stroke="#c9a800" stroke-width="0.6"/><path d="M444,75 L436,83" stroke="#222" stroke-width="4" stroke-linecap="round"/><path d="M443,76 L437,82" stroke="#f5c431" stroke-width="2.2" stroke-linecap="round"/><circle cx="448" cy="70" r="7" fill="#f0eedc" stroke="#444" stroke-width="1.4"/><rect x="468" y="64" width="8" height="14" fill="#eee" stroke="#888" stroke-width="0.7"/><path d="M477,75 L469,83" stroke="#222" stroke-width="4" stroke-linecap="round"/><path d="M476,76 L470,82" stroke="#f5c431" stroke-width="2.2" stroke-linecap="round"/><circle cx="481" cy="70" r="7" fill="#ececec" stroke="#444" stroke-width="1.4"/><path d="M509,75 L501,83" stroke="#222" stroke-width="4" stroke-linecap="round"/><path d="M508,76 L502,82" stroke="#f5c431" stroke-width="2.2" stroke-linecap="round"/><circle cx="513" cy="70" r="7" fill="#ececec" stroke="#444" stroke-width="1.4"/><rect x="512" y="74" width="11" height="10" fill="#5a8fd0"/><path d="M520,76 l-4,3 4,3" stroke="#fff" stroke-width="1.6" fill="none"/><path d="M542,75 L534,83" stroke="#222" stroke-width="4" stroke-linecap="round"/><path d="M541,76 L535,82" stroke="#e0ddd4" stroke-width="2.2" stroke-linecap="round"/><circle cx="546" cy="70" r="7" fill="#f3f3f3" stroke="#d0d0d0" stroke-width="1.4"/><rect x="545" y="74" width="11" height="10" fill="#e0e0e0"/><path d="M548,76 l4,3 -4,3" stroke="#fff" stroke-width="1.6" fill="none"/><path d="M568,64 h17 v18 h-17 z" fill="#e4e4e4" stroke="#8a8a8a" stroke-width="0.8"/><path d="M568,64 c-2,0 -2,3 0,3 M568,82 c-2,0 -2,-3 0,-3" fill="#ddd" stroke="#8a8a8a" stroke-width="0.8"/><rect x="578" y="74" width="11" height="11" rx="1.5" fill="#c9a300"/><path d="M583.5,76.5 v6 M580.5,79.5 h6 M581.4,77.4 l4.2,4.2 M581.4,81.6 l4.2,-4.2" stroke="#fff" stroke-width="1.1"/><path d="M601,64 h17 v18 h-17 z" fill="#e4e4e4" stroke="#8a8a8a" stroke-width="0.8"/><path d="M601,64 c-2,0 -2,3 0,3 M601,82 c-2,0 -2,-3 0,-3" fill="#ddd" stroke="#8a8a8a" stroke-width="0.8"/><path d="M611,62 h4 v6 l-2,2 -2,-2 z" fill="#5a8fd0" stroke="#3d6fae" stroke-width="0.5"/><rect x="611" y="74" width="11" height="11" rx="1.5" fill="#c9a300"/><path d="M616.5,76.5 v6 M613.5,79.5 h6 M614.4,77.4 l4.2,4.2 M614.4,81.6 l4.2,-4.2" stroke="#fff" stroke-width="1.1"/><path d="M634,64 h17 v18 h-17 z" fill="#e4e4e4" stroke="#8a8a8a" stroke-width="0.8"/><path d="M634,64 c-2,0 -2,3 0,3 M634,82 c-2,0 -2,-3 0,-3" fill="#ddd" stroke="#8a8a8a" stroke-width="0.8"/><path d="M644,62 h4 v6 l-2,2 -2,-2 z" fill="#5a8fd0" stroke="#3d6fae" stroke-width="0.5"/><path d="M669,73 a8,8 0 0 1 14,-5" fill="none" stroke="#3f86d4" stroke-width="3.5"/><path d="M686,62 v9 h-9 z" fill="#3f86d4"/><path d="M684,73 a8,8 0 0 1 -14,5" fill="none" stroke="#3f86d4" stroke-width="3.5"/><path d="M667,85 v-9 h9 z" fill="#3f86d4"/><rect x="702" y="65.0" width="1" height="1" fill="#a8a8a8"/><rect x="705" y="65.0" width="1" height="1" fill="#a8a8a8"/><rect x="702" y="68.2" width="1" height="1" fill="#a8a8a8"/><rect x="705" y="68.2" width="1" height="1" fill="#a8a8a8"/><rect x="702" y="71.4" width="1" height="1" fill="#a8a8a8"/><rect x="705" y="71.4" width="1" height="1" fill="#a8a8a8"/><rect x="702" y="74.6" width="1" height="1" fill="#a8a8a8"/><rect x="705" y="74.6" width="1" height="1" fill="#a8a8a8"/><rect x="702" y="77.8" width="1" height="1" fill="#a8a8a8"/><rect x="705" y="77.8" width="1" height="1" fill="#a8a8a8"/><rect x="702" y="81.0" width="1" height="1" fill="#a8a8a8"/><rect x="705" y="81.0" width="1" height="1" fill="#a8a8a8"/><circle cx="724" cy="70" r="8.5" fill="#5d8ed0" stroke="#4d7ebf" stroke-width="0.8"/><text x="721" y="76" font-family="Liberation Serif" font-style="italic" font-weight="bold" font-size="13" fill="#fff">i</text><path d="M727,71 v12 l3,-3 3,5 2,-1 -3,-5 h4 z" fill="#fff" stroke="#222" stroke-width="0.9" stroke-linejoin="round"/><circle cx="758" cy="71" r="8" fill="#e5e5e5" stroke="#d0d0d0" stroke-width="2" stroke-dasharray="3 1.5"/><path d="M756,67 v8 l6,-4 z" fill="#fff"/><path d="M762,73 v12 l3,-3 3,5 2,-1 -3,-5 h4 z" fill="#f5f5f5" stroke="#ccc" stroke-width="0.9"/><path d="M779,71 h9 l-4.5,4.5 z" fill="#aaa"/><path d="M798,62 l13,3 -2,12 -11,0 z" fill="#f5e04a" stroke="#444" stroke-width="0.8" stroke-dasharray="2 1"/><path d="M812,63 l7,-1 -3,10" fill="none" stroke="#444" stroke-width="0.8" stroke-dasharray="2 1"/><path d="M807,70 v12 l3,-3 3,5 2,-1 -3,-5 h4 z" fill="#fff" stroke="#222" stroke-width="0.9" stroke-linejoin="round"/><path d="M827,71 h9 l-4.5,4.5 z" fill="#555"/><rect x="851" y="70" width="15" height="13" fill="#f5e04a" stroke="#c9a800" stroke-width="0.8"/><rect x="847.5" y="64.5" width="15" height="13" fill="#e8e8e8" stroke="#8a8a8a"/><path d="M850,68 h10 M850,73 h10" stroke="#8a8a8a" stroke-width="1.6"/><path d="M875,71 h9 l-4.5,4.5 z" fill="#555"/><rect x="894" y="63" width="14" height="13" fill="#f5e04a" stroke="#c9a800" stroke-width="0.7"/><rect x="905" y="74" width="11" height="11" rx="2" fill="#e02424"/><path d="M908,82 l5,-5" stroke="#fff" stroke-width="1.5"/><circle cx="910.5" cy="79.5" r="3" fill="none" stroke="#fff" stroke-width="1"/><rect x="927.5" y="63.5" width="19" height="19" fill="#eef4fb" stroke="#6f9ad0"/><path d="M928,67.5 h19" stroke="#6f9ad0" stroke-width="3"/><path d="M930,71 h4 M936,71 h9 M930,74 h4 M936,74 h9 M930,77 h4 M936,77 h9 M930,80 h4 M936,80 h9" stroke="#6f9ad0" stroke-width="1"/><path d="M960.5,63 v19 M980.5,63 v19 M959,82.5 h23" stroke="#666" stroke-width="1.5"/><path d="M961,65.5 h19 M961,70.5 h19 M961,76 h19" stroke="#666" stroke-width="0.8"/><path d="M967,63 l2.5,2.5 -2.5,2.5 -2.5,-2.5 z" fill="#e76a6a" stroke="#c33" stroke-width="0.5"/><path d="M975,63 l2.5,2.5 -2.5,2.5 -2.5,-2.5 z" fill="#e76a6a" stroke="#c33" stroke-width="0.5"/><path d="M965,68 l2.5,2.5 -2.5,2.5 -2.5,-2.5 z" fill="#8fd48f" stroke="#5a5" stroke-width="0.5"/><path d="M971,68 l2.5,2.5 -2.5,2.5 -2.5,-2.5 z" fill="#8fd48f" stroke="#5a5" stroke-width="0.5"/><path d="M965,73.5 l2.5,2.5 -2.5,2.5 -2.5,-2.5 z" fill="#8ec2ea" stroke="#48c" stroke-width="0.5"/><path d="M970,73.5 l2.5,2.5 -2.5,2.5 -2.5,-2.5 z" fill="#8ec2ea" stroke="#48c" stroke-width="0.5"/><path d="M975,73.5 l2.5,2.5 -2.5,2.5 -2.5,-2.5 z" fill="#8ec2ea" stroke="#48c" stroke-width="0.5"/><circle cx="1003" cy="73" r="7" fill="none" stroke="#6e9ad6" stroke-width="3.6" stroke-dasharray="2.6 2.9"/><circle cx="1003" cy="73" r="5.3" fill="none" stroke="#6e9ad6" stroke-width="3"/><path d="M1029,64 h14 v4 M1029,64 l8,9 -8,9 h14 v-4" fill="none" stroke="#9b1e9b" stroke-width="2.6" stroke-linejoin="miter"/><path d="M1059,67 h20 M1059.5,64 v6 M1078.5,64 v6" stroke="#334e6e" stroke-width="1.5"/><rect x="1058.5" y="72.5" width="21" height="7" fill="#c8c8c8" stroke="#777"/><path d="M1062,73 v3 M1065,73 v2 M1068,73 v3 M1071,73 v2 M1074,73 v3 M1077,73 v2" stroke="#555" stroke-width="0.7"/><path d="M1087,71 h9 l-4.5,4.5 z" fill="#555"/><path d="M1107.5,64.5 h19 a2,2 0 0 1 2,2 v9 a2,2 0 0 1 -2,2 h-13 l-4,4 v-4 h-2 a2,2 0 0 1 -2,-2 v-9 a2,2 0 0 1 2,-2 z" fill="#fbe68a" stroke="#d4b23a" stroke-width="1"/><circle cx="1110" cy="82" r="3.2" fill="#6aae6a" stroke="#4a8e4a" stroke-width="0.6"/><path d="M1139.5,63.5 h21 v16 h-15 l-6,4 v-4 z" fill="#e8eef5" stroke="#aab" stroke-width="1"/><rect x="1149" y="73" width="12" height="10" rx="1.5" fill="#2f4f6f"/><path d="M1151,78 h6 M1154.5,75 l3,3 -3,3" stroke="#fff" stroke-width="1.7" fill="none"/><path d="M1169,71 h9 l-4.5,4.5 z" fill="#555"/><rect x="1191" y="65.0" width="1" height="1" fill="#a8a8a8"/><rect x="1194" y="65.0" width="1" height="1" fill="#a8a8a8"/><rect x="1191" y="68.2" width="1" height="1" fill="#a8a8a8"/><rect x="1194" y="68.2" width="1" height="1" fill="#a8a8a8"/><rect x="1191" y="71.4" width="1" height="1" fill="#a8a8a8"/><rect x="1194" y="71.4" width="1" height="1" fill="#a8a8a8"/><rect x="1191" y="74.6" width="1" height="1" fill="#a8a8a8"/><rect x="1194" y="74.6" width="1" height="1" fill="#a8a8a8"/><rect x="1191" y="77.8" width="1" height="1" fill="#a8a8a8"/><rect x="1194" y="77.8" width="1" height="1" fill="#a8a8a8"/><rect x="1191" y="81.0" width="1" height="1" fill="#a8a8a8"/><rect x="1194" y="81.0" width="1" height="1" fill="#a8a8a8"/><path d="M1224,73 a8,8 0 1 1 -3,-6.2" fill="none" stroke="#000" stroke-width="2.6"/><path d="M1226,66 l-1,9 -6,-4 z" fill="#000"/><path d="M1241,73 a8,8 0 1 0 3,-6.2" fill="none" stroke="#000" stroke-width="2.6"/><path d="M1239,66 l1,9 6,-4 z" fill="#000"/><rect x="1275" y="65.0" width="1" height="1" fill="#a8a8a8"/><rect x="1278" y="65.0" width="1" height="1" fill="#a8a8a8"/><rect x="1275" y="68.2" width="1" height="1" fill="#a8a8a8"/><rect x="1278" y="68.2" width="1" height="1" fill="#a8a8a8"/><rect x="1275" y="71.4" width="1" height="1" fill="#a8a8a8"/><rect x="1278" y="71.4" width="1" height="1" fill="#a8a8a8"/><rect x="1275" y="74.6" width="1" height="1" fill="#a8a8a8"/><rect x="1278" y="74.6" width="1" height="1" fill="#a8a8a8"/><rect x="1275" y="77.8" width="1" height="1" fill="#a8a8a8"/><rect x="1278" y="77.8" width="1" height="1" fill="#a8a8a8"/><rect x="1275" y="81.0" width="1" height="1" fill="#a8a8a8"/><rect x="1278" y="81.0" width="1" height="1" fill="#a8a8a8"/><path d="M1288.5,61.5 h9 l3,3 v14 h-12 z" fill="#fff" stroke="#3a6ea5" stroke-width="1"/><path d="M1297.5,61.5 v3 h3" fill="none" stroke="#3a6ea5" stroke-width="1"/><circle cx="1294" cy="71" r="1.2" fill="#e00"/><path d="M1297.5,66.5 h11 l4,4 v15 h-15 z" fill="#fff" stroke="#3a6ea5" stroke-width="1"/><path d="M1308.5,66.5 v4 h4" fill="none" stroke="#3a6ea5" stroke-width="1"/><circle cx="1303" cy="77" r="1.2" fill="#e00"/><path d="M1322,62 h22 v22 h-22 z" fill="#b6dba0"/><path d="M1324,66 q5,6 10,2 t8,12" stroke="#e0a0a0" stroke-width="0.5" fill="none"/><path d="M1329,82 l5,-7" stroke="#555" stroke-width="1.5"/><circle cx="1336" cy="68" r="4.5" fill="#e21b1b"/><path d="M1333,70 l6,4 -3,2z" fill="#e21b1b"/><path d="M1367,75 l9,9" stroke="#c9700d" stroke-width="3.5" stroke-linecap="round"/><path d="M1367,75 l9,9" stroke="#f0a030" stroke-width="2" stroke-linecap="round"/><circle cx="1362" cy="69" r="7.5" fill="#d5e7f8" stroke="#2d3f7a" stroke-width="1.3"/><circle cx="1362" cy="68" r="1.3" fill="#e00"/><path d="M1400,74 l9,9" stroke="#c9700d" stroke-width="3.5" stroke-linecap="round"/><path d="M1400,74 l9,9" stroke="#f0a030" stroke-width="2" stroke-linecap="round"/><circle cx="1395" cy="68" r="6.8" fill="#d5e7f8" stroke="#2d3f7a" stroke-width="1.3"/><circle cx="1395" cy="68" r="1.3" fill="#e00"/><circle cx="1407" cy="65" r="1.6" fill="#e00"/><circle cx="1393" cy="80" r="1.6" fill="#e00"/><circle cx="1400" cy="82" r="1.6" fill="#e00"/><circle cx="1432" cy="74" r="9" fill="none" stroke="#777" stroke-width="1.8"/><path d="M1423,74 h18 M1432,65 v18 M1425,69 h14 M1425,79 h14" stroke="#777" stroke-width="1.3"/><ellipse cx="1432" cy="74" rx="4" ry="9" fill="none" stroke="#777" stroke-width="1.3"/><text x="1456" y="72" font-family="Liberation Sans" font-weight="bold" font-size="10" fill="#d0d0cc">X,Y</text><circle cx="1460" cy="78" r="2" fill="#cfcfcf"/><rect x="1466" y="74" width="10" height="10" rx="1" fill="#d6d3cb"/><rect x="1489.5" y="64.5" width="17" height="17" fill="#b9dea5" stroke="#333" stroke-width="1.3"/><rect x="1487" y="62" width="4" height="4" fill="#fff" stroke="#333" stroke-width="0.9"/><rect x="1505" y="62" width="4" height="4" fill="#fff" stroke="#333" stroke-width="0.9"/><rect x="1487" y="80" width="4" height="4" fill="#fff" stroke="#333" stroke-width="0.9"/><rect x="1505" y="80" width="4" height="4" fill="#fff" stroke="#333" stroke-width="0.9"/><circle cx="1498.5" cy="73" r="2" fill="#e00"/><rect x="6" y="104.0" width="1" height="1" fill="#a8a8a8"/><rect x="9" y="104.0" width="1" height="1" fill="#a8a8a8"/><rect x="6" y="107.2" width="1" height="1" fill="#a8a8a8"/><rect x="9" y="107.2" width="1" height="1" fill="#a8a8a8"/><rect x="6" y="110.4" width="1" height="1" fill="#a8a8a8"/><rect x="9" y="110.4" width="1" height="1" fill="#a8a8a8"/><rect x="6" y="113.6" width="1" height="1" fill="#a8a8a8"/><rect x="9" y="113.6" width="1" height="1" fill="#a8a8a8"/><rect x="6" y="116.8" width="1" height="1" fill="#a8a8a8"/><rect x="9" y="116.8" width="1" height="1" fill="#a8a8a8"/><rect x="6" y="120.0" width="1" height="1" fill="#a8a8a8"/><rect x="9" y="120.0" width="1" height="1" fill="#a8a8a8"/><path d="M20,110 l10,-4 6,14 -10,4 z" fill="#e06a3a"/><path d="M23,106 l10,-3 4,14 -10,3 z" fill="#f5c431"/><path d="M28,101 l13,2 -2,13 -13,-2 z" fill="#6b99cd" stroke="#4f7fb6" stroke-width="0.6"/><rect x="34" y="115" width="9" height="9" rx="1.5" fill="#5a9a5a"/><path d="M38.5,116.5 v6 M35.5,119.5 h6" stroke="#fff" stroke-width="1.6"/><path d="M52,109 l13,-3 10,4 v11 l-10,4 -13,-4 z" fill="#e8c21a" stroke="#554400" stroke-width="0.8"/><circle cx="64" cy="106" r="7" fill="#7fa5d6" stroke="#4a6e9e" stroke-width="0.6"/><path d="M52,109 l13,4 10,-4 M65,113 v12" stroke="#554400" stroke-width="0.8" fill="none"/><path d="M65,113 l10,-4 v11 l-10,4z" fill="#f7e86a"/><rect x="67" y="115" width="9" height="9" rx="1.5" fill="#c9a300"/><path d="M71.5,116.5 v6 M68.5,119.5 h6 M69.4,117.4 l4.2,4.2 M69.4,121.6 l4.2,-4.2" stroke="#fff" stroke-width="1.1"/><path d="M87,102 l9,19 9,-19 h6" fill="none" stroke="#334" stroke-width="1.3"/><circle cx="96" cy="121" r="1.8" fill="#fff" stroke="#334"/><rect x="85" y="100.5" width="3" height="3" fill="#fff" stroke="#334" stroke-width="0.7" transform="rotate(45 86.5 102)"/><rect x="100" y="115" width="9" height="9" rx="1.5" fill="#c9a300"/><path d="M104.5,116.5 v6 M101.5,119.5 h6 M102.4,117.4 l4.2,4.2 M102.4,121.6 l4.2,-4.2" stroke="#fff" stroke-width="1.1"/><path d="M120,124 c3,-10 10,-20 22,-23 c-2,8 -8,18 -20,21 z" fill="#8fb0dc" stroke="#4a6e9e" stroke-width="0.7"/><rect x="133" y="115" width="9" height="9" rx="1.5" fill="#c9a300"/><path d="M137.5,116.5 v6 M134.5,119.5 h6 M135.4,117.4 l4.2,4.2 M135.4,121.6 l4.2,-4.2" stroke="#fff" stroke-width="1.1"/><rect x="154.5" y="104.5" width="19" height="12" rx="1" fill="#6b99cd" stroke="#3f6a9e"/><path d="M157,104 v-4 M160,104 v-4 M163,104 v-4 M166,104 v-4 M169,104 v-4 M157,117 v3 M160,117 v3 M163,117 v3" stroke="#334" stroke-width="0.9"/><rect x="166" y="115" width="9" height="9" rx="1.5" fill="#c9a300"/><path d="M170.5,116.5 v6 M167.5,119.5 h6 M168.4,117.4 l4.2,4.2 M168.4,121.6 l4.2,-4.2" stroke="#fff" stroke-width="1.1"/><path d="M183.5,103 v19" stroke="#d8d8d8"/><rect x="192.5" y="101.5" width="22" height="21" rx="2" fill="#c9d9ec" stroke="#4f7fb6"/><path d="M194,103 l6,15 7,-15" fill="none" stroke="#334" stroke-width="1.2"/><circle cx="200" cy="118" r="1.6" fill="#fff" stroke="#334"/><rect x="207" y="115" width="9" height="9" rx="1.5" fill="#c9a300"/><path d="M211.5,116.5 v6 M208.5,119.5 h6 M209.4,117.4 l4.2,4.2 M209.4,121.6 l4.2,-4.2" stroke="#fff" stroke-width="1.1"/><rect x="230" y="104.0" width="1" height="1" fill="#a8a8a8"/><rect x="233" y="104.0" width="1" height="1" fill="#a8a8a8"/><rect x="230" y="107.2" width="1" height="1" fill="#a8a8a8"/><rect x="233" y="107.2" width="1" height="1" fill="#a8a8a8"/><rect x="230" y="110.4" width="1" height="1" fill="#a8a8a8"/><rect x="233" y="110.4" width="1" height="1" fill="#a8a8a8"/><rect x="230" y="113.6" width="1" height="1" fill="#a8a8a8"/><rect x="233" y="113.6" width="1" height="1" fill="#a8a8a8"/><rect x="230" y="116.8" width="1" height="1" fill="#a8a8a8"/><rect x="233" y="116.8" width="1" height="1" fill="#a8a8a8"/><rect x="230" y="120.0" width="1" height="1" fill="#a8a8a8"/><rect x="233" y="120.0" width="1" height="1" fill="#a8a8a8"/><path d="M247,122 l5,-20 4,1 -5,20 z M252,122 l5,-20 4,1 -5,20 z" fill="#e0ddd8" stroke="#ccc" stroke-width="0.6"/><path d="M261,119 h9 l-4.5,4.5 z" fill="#999"/><path d="M281,123 l2,-6 10,-15 3,2 -10,15 z" fill="#f5d92b" stroke="#555" stroke-width="0.8"/><path d="M281,123 l2,-6 3,2 z" fill="#666"/><rect x="310.5" y="101.5" width="20" height="20" rx="2" fill="#dedede" stroke="#cdcdcd"/><rect x="314" y="102" width="12" height="7" fill="#f2f2f2"/><rect x="314" y="114" width="10" height="7" fill="#f2f2f2"/><path d="M344,106 c0,-5 8,-5 12,-3 c4,1 9,-2 10,3 c1,4 -3,6 -6,7 c-4,1 -8,-2 -12,0 c-3,1 -4,-3 -4,-7z" fill="#dfdfdd" stroke="#cfcfcc" stroke-width="0.6"/><rect x="355" y="113" width="11" height="11" rx="1.5" fill="#d6d3cb"/><rect x="378" y="102" width="4" height="4" fill="none" stroke="#c8c8c8"/><path d="M382,104 h14 M380,106 l-4,15" stroke="#c8c8c8" stroke-width="1"/><path d="M385,122 l10,-12 M386,110 l10,12" stroke="#d6d3cb" stroke-width="3"/><path d="M406,110 h9 l-4.5,4.5 z" fill="#999"/><path d="M425,103 h20 v5 h-20 z M425,110 h20 v5 h-20 z M425,117 h20 v5 h-20 z" fill="#e2e2dc" stroke="#d0d0ca" stroke-width="0.6"/><path d="M431,122 l12,-19 3,2 -12,19 z" fill="#e8e8e4" stroke="#ccc" stroke-width="0.6"/><path d="M461,104 h16 M464,104 l1,19 h9 l1,-19 M467,107 v14 M471,107 v14" fill="none" stroke="#d8cccc" stroke-width="2"/><path d="M466,102 h6" stroke="#d8cccc" stroke-width="1.5"/><path d="M491,106 l16,8 M491,113 l16,-7" stroke="#d8d8d8" stroke-width="1"/><circle cx="508" cy="105.5" r="2.7" fill="none" stroke="#d0c8c8" stroke-width="1.4"/><circle cx="508" cy="116" r="2.7" fill="none" stroke="#d0c8c8" stroke-width="1.4"/><path d="M533.5,101.5 h7 l3,3 v11 h-10 z" fill="#fff" stroke="#555" stroke-width="1"/><path d="M540.5,101.5 v3 h3" fill="none" stroke="#555" stroke-width="1"/><path d="M526.5,106.5 h8 l3,3 v13 h-11 z" fill="#fff" stroke="#222" stroke-width="1"/><path d="M534.5,106.5 v3 h3" fill="none" stroke="#222" stroke-width="1"/><path d="M528,113 h7 M528,115.5 h7 M528,118 h7" stroke="#333" stroke-width="0.7"/><rect x="559.5" y="103.5" width="16" height="18" fill="#f4f4f4" stroke="#d5d5d5"/><rect x="562" y="101" width="10" height="4" fill="#e4e4e4"/><path d="M562,110 h10 M562,113 h10 M562,116 h10" stroke="#ddd" stroke-width="0.8"/><path d="M592,110 l7,-7 v4 c6,0 10,3 10,8 c0,4 -4,7 -8,6 c3,-2 3,-7 -2,-7 v4 z" fill="#dcd7d3"/><path d="M642,110 l-7,-7 v4 c-6,0 -10,3 -10,8 c0,4 4,7 8,6 c-3,-2 -3,-7 2,-7 v4 z" fill="#dcdcda"/><rect x="659" y="104.0" width="1" height="1" fill="#a8a8a8"/><rect x="662" y="104.0" width="1" height="1" fill="#a8a8a8"/><rect x="659" y="107.2" width="1" height="1" fill="#a8a8a8"/><rect x="662" y="107.2" width="1" height="1" fill="#a8a8a8"/><rect x="659" y="110.4" width="1" height="1" fill="#a8a8a8"/><rect x="662" y="110.4" width="1" height="1" fill="#a8a8a8"/><rect x="659" y="113.6" width="1" height="1" fill="#a8a8a8"/><rect x="662" y="113.6" width="1" height="1" fill="#a8a8a8"/><rect x="659" y="116.8" width="1" height="1" fill="#a8a8a8"/><rect x="662" y="116.8" width="1" height="1" fill="#a8a8a8"/><rect x="659" y="120.0" width="1" height="1" fill="#a8a8a8"/><rect x="662" y="120.0" width="1" height="1" fill="#a8a8a8"/><path d="M672,109.5 l4,-5 h17 v11 h-17 z" fill="#f5e04a" stroke="#c9a800" stroke-width="0.9"/><text x="676" y="113" font-family="Liberation Sans" font-weight="bold" font-size="9" fill="#222" letter-spacing="-0.3">abc</text><circle cx="714" cy="108" r="6.5" fill="#e02020"/><path d="M714,108 v-6.5 a6.5,6.5 0 0 1 6.3,4.8 z" fill="#f5d90a"/><path d="M714,108 l-6,3 a6.5,6.5 0 0 1 6,-9.5 z" fill="#22a022"/><rect x="715" y="115" width="4" height="7" fill="#f5c431"/><rect x="720" y="110" width="4" height="12" fill="#22a022"/><rect x="724" y="117" width="3" height="5" fill="#c02020"/><rect x="738.5" y="102.5" width="23" height="19" fill="#dde8f5" stroke="#2a7de1" stroke-width="1.2"/><path d="M739,109.5 l4,-5 h17 v11 h-17 z" fill="#f5e04a" stroke="#c9a800" stroke-width="0.9"/><text x="743" y="113" font-family="Liberation Sans" font-weight="bold" font-size="9" fill="#222" letter-spacing="-0.3">ab</text><path d="M755,112 v6" stroke="#ccc" stroke-width="1.5"/><circle cx="757" cy="118.5" r="4" fill="#b41e1e"/><path d="M771,109.5 l4,-5 h17 v11 h-17 z" fill="#f5e04a" stroke="#c9a800" stroke-width="0.9"/><text x="775" y="113" font-family="Liberation Sans" font-weight="bold" font-size="9" fill="#222" letter-spacing="-0.3">ab</text><path d="M788,112 v6" stroke="#ccc" stroke-width="1.5"/><circle cx="790" cy="118.5" r="4" fill="#b41e1e"/><path d="M804,109.5 l4,-5 h17 v11 h-17 z" fill="#f5e04a" stroke="#c9a800" stroke-width="0.9"/><text x="808" y="113" font-family="Liberation Sans" font-weight="bold" font-size="9" fill="#222" letter-spacing="-0.3">abc</text><path d="M812,119 q7,-6 14,0 q-7,6 -14,0z" fill="#fff" stroke="#333" stroke-width="0.8"/><circle cx="819" cy="119" r="2.6" fill="#3a7ad8"/><path d="M837,109.5 l4,-5 h17 v11 h-17 z" fill="#f5e04a" stroke="#c9a800" stroke-width="0.9"/><text x="841" y="113" font-family="Liberation Sans" font-weight="bold" font-size="9" fill="#222" letter-spacing="-0.3">abc</text><rect x="850" y="113" width="11" height="10" rx="1.5" fill="#2f4f6f"/><path d="M852,118 h6 M855.5,115 l3,3 -3,3" stroke="#fff" stroke-width="1.7" fill="none"/><path d="M870,109.5 l4,-5 h17 v11 h-17 z" fill="#f5e04a" stroke="#c9a800" stroke-width="0.9"/><text x="874" y="113" font-family="Liberation Sans" font-weight="bold" font-size="9" fill="#222" letter-spacing="-0.3">abc</text><rect x="883" y="113" width="11" height="10" rx="1.5" fill="#2f4f6f"/><circle cx="888.5" cy="118" r="2.5" fill="none" stroke="#fff" stroke-width="1.3"/><path d="M903,109.5 l4,-5 h17 v11 h-17 z" fill="#f5e04a" stroke="#c9a800" stroke-width="0.9"/><text x="907" y="113" font-family="Liberation Sans" font-weight="bold" font-size="9" fill="#222" letter-spacing="-0.3">abc</text><rect x="916" y="113" width="11" height="10" rx="1.5" fill="#c9a300"/><path d="M918,121 l7,-6" stroke="#fff" stroke-width="1.7"/><rect x="941" y="104.0" width="1" height="1" fill="#a8a8a8"/><rect x="944" y="104.0" width="1" height="1" fill="#a8a8a8"/><rect x="941" y="107.2" width="1" height="1" fill="#a8a8a8"/><rect x="944" y="107.2" width="1" height="1" fill="#a8a8a8"/><rect x="941" y="110.4" width="1" height="1" fill="#a8a8a8"/><rect x="944" y="110.4" width="1" height="1" fill="#a8a8a8"/><rect x="941" y="113.6" width="1" height="1" fill="#a8a8a8"/><rect x="944" y="113.6" width="1" height="1" fill="#a8a8a8"/><rect x="941" y="116.8" width="1" height="1" fill="#a8a8a8"/><rect x="944" y="116.8" width="1" height="1" fill="#a8a8a8"/><rect x="941" y="120.0" width="1" height="1" fill="#a8a8a8"/><rect x="944" y="120.0" width="1" height="1" fill="#a8a8a8"/><circle cx="966" cy="110" r="11" fill="#7fa5d6" stroke="#3a5f94" stroke-width="0.8"/><path d="M956,110 h20 M966,99 v22 M958,104 h16 M958,116 h16" stroke="#dfe9f5" stroke-width="0.8"/><ellipse cx="961" cy="119" rx="4.5" ry="3.5" fill="#111"/><ellipse cx="972" cy="119" rx="4.5" ry="3.5" fill="#111"/><ellipse cx="961" cy="119.5" rx="2.5" ry="1.8" fill="#fff"/><ellipse cx="972" cy="119.5" rx="2.5" ry="1.8" fill="#fff"/><rect x="963" y="113" width="7" height="5" fill="#111"/><rect x="992" y="104.0" width="1" height="1" fill="#a8a8a8"/><rect x="995" y="104.0" width="1" height="1" fill="#a8a8a8"/><rect x="992" y="107.2" width="1" height="1" fill="#a8a8a8"/><rect x="995" y="107.2" width="1" height="1" fill="#a8a8a8"/><rect x="992" y="110.4" width="1" height="1" fill="#a8a8a8"/><rect x="995" y="110.4" width="1" height="1" fill="#a8a8a8"/><rect x="992" y="113.6" width="1" height="1" fill="#a8a8a8"/><rect x="995" y="113.6" width="1" height="1" fill="#a8a8a8"/><rect x="992" y="116.8" width="1" height="1" fill="#a8a8a8"/><rect x="995" y="116.8" width="1" height="1" fill="#a8a8a8"/><rect x="992" y="120.0" width="1" height="1" fill="#a8a8a8"/><rect x="995" y="120.0" width="1" height="1" fill="#a8a8a8"/><path d="M1017,101 c-6,0 -6,2 -6,4 v3 h7 v1 h-9 c-3,0 -4,3 -4,6 c0,3 1,5 4,5 h2 v-3 c0,-2 2,-4 4,-4 h6 c2,0 3,-1 3,-3 v-5 c0,-2 -2,-4 -7,-4z" fill="#3b77a8"/><path d="M1019,124 c6,0 6,-2 6,-4 v-3 h-7 v-1 h9 c3,0 4,-3 4,-6 c0,-3 -1,-5 -4,-5 h-2 v3 c0,2 -2,4 -4,4 h-6 c-2,0 -3,1 -3,3 v5 c0,2 2,4 7,4z" fill="#f5cf45"/><path d="M1022,118 l4,2.5 -4,2.5" fill="none" stroke="#444" stroke-width="1"/><rect x="1039" y="100" width="23" height="23" fill="#fff"/><rect x="1045" y="102" width="14" height="11" fill="#b79cf5"/><circle cx="1046" cy="114" r="5.5" fill="none" stroke="#e8405a" stroke-width="0.9"/><rect x="1072" y="100" width="23" height="23" fill="#fff"/><rect x="1078" y="102" width="14" height="11" fill="#b79cf5"/><circle cx="1079" cy="114" r="5.5" fill="none" stroke="#e8405a" stroke-width="0.9"/><text x="1073" y="109" font-family="Liberation Sans" font-size="8" fill="#000">Prev</text><text x="1073" y="119" font-family="Liberation Sans" font-size="8" fill="#000">Inter</text><rect x="1105" y="100" width="23" height="23" fill="#fff"/><rect x="1111" y="102" width="14" height="11" fill="#b79cf5"/><circle cx="1112" cy="114" r="5.5" fill="none" stroke="#e8405a" stroke-width="0.9"/><text x="1106" y="109" font-family="Liberation Sans" font-size="8" fill="#000">Prev</text><text x="1106" y="119" font-family="Liberation Sans" font-size="8" fill="#000">Clip</text><path d="M1138,123 c6,-8 8,-4 12,-14 c3,-7 6,-8 10,-9 v6 c-3,1 -5,3 -7,8 c-4,8 -7,6 -9,9 z" fill="#111"/><path d="M1142,122 c5,-6 7,-4 10,-12 c2,-5 4,-6 7,-7" stroke="#fff" stroke-width="0.7" fill="none" stroke-dasharray="2 2"/><rect x="1155" y="108" width="6" height="15" fill="#f5d90a"/><rect x="1157" y="113" width="2.5" height="6" fill="#111"/><circle cx="1178" cy="109" r="8.5" fill="#1f8a1f"/><text x="1175" y="115" font-family="Liberation Serif" font-style="italic" font-weight="bold" font-size="13" fill="#fff">i</text><path d="M1182,110 v12 l3,-3 3,5 2,-1 -3,-5 h4 z" fill="#fff" stroke="#222" stroke-width="0.9" stroke-linejoin="round"/><rect x="1208" y="104.0" width="1" height="1" fill="#a8a8a8"/><rect x="1211" y="104.0" width="1" height="1" fill="#a8a8a8"/><rect x="1208" y="107.2" width="1" height="1" fill="#a8a8a8"/><rect x="1211" y="107.2" width="1" height="1" fill="#a8a8a8"/><rect x="1208" y="110.4" width="1" height="1" fill="#a8a8a8"/><rect x="1211" y="110.4" width="1" height="1" fill="#a8a8a8"/><rect x="1208" y="113.6" width="1" height="1" fill="#a8a8a8"/><rect x="1211" y="113.6" width="1" height="1" fill="#a8a8a8"/><rect x="1208" y="116.8" width="1" height="1" fill="#a8a8a8"/><rect x="1211" y="116.8" width="1" height="1" fill="#a8a8a8"/><rect x="1208" y="120.0" width="1" height="1" fill="#a8a8a8"/><rect x="1211" y="120.0" width="1" height="1" fill="#a8a8a8"/><rect x="1223" y="101" width="20" height="21" fill="#6b99cd" stroke="#2f3f50" stroke-width="0.8"/><rect x="1223" y="101" width="5" height="21" fill="#2f3f50"/><text x="1230" y="117" font-family="Liberation Sans" font-size="13" fill="#fff">?</text><rect x="1259" y="104.0" width="1" height="1" fill="#a8a8a8"/><rect x="1262" y="104.0" width="1" height="1" fill="#a8a8a8"/><rect x="1259" y="107.2" width="1" height="1" fill="#a8a8a8"/><rect x="1262" y="107.2" width="1" height="1" fill="#a8a8a8"/><rect x="1259" y="110.4" width="1" height="1" fill="#a8a8a8"/><rect x="1262" y="110.4" width="1" height="1" fill="#a8a8a8"/><rect x="1259" y="113.6" width="1" height="1" fill="#a8a8a8"/><rect x="1262" y="113.6" width="1" height="1" fill="#a8a8a8"/><rect x="1259" y="116.8" width="1" height="1" fill="#a8a8a8"/><rect x="1262" y="116.8" width="1" height="1" fill="#a8a8a8"/><rect x="1259" y="120.0" width="1" height="1" fill="#a8a8a8"/><rect x="1262" y="120.0" width="1" height="1" fill="#a8a8a8"/><path d="M1276,108 c4,-6 14,-8 19,-5 c3,4 -2,11 -6,14 c-5,3 -11,2 -13,-2 c-1,-2 -1,-5 0,-7z" fill="#6b99cd" stroke="#3a5f94" stroke-width="0.7"/><path d="M1274,102 l10,6 10,-5 M1284,108 l-9,15" stroke="#334" stroke-width="0.9" fill="none"/><circle cx="1274" cy="102" r="2.2" fill="#f5e04a" stroke="#555" stroke-width="0.6"/><circle cx="1294" cy="102" r="2.2" fill="#f5e04a" stroke="#555" stroke-width="0.6"/><circle cx="1284" cy="108" r="2.2" fill="#f5e04a" stroke="#555" stroke-width="0.6"/><circle cx="1275" cy="123" r="2.2" fill="#f5e04a" stroke="#555" stroke-width="0.6"/><path d="M1286,116 l3,5 7,-8" fill="none" stroke="#e8d02a" stroke-width="2"/><rect x="1310" y="104.0" width="1" height="1" fill="#a8a8a8"/><rect x="1313" y="104.0" width="1" height="1" fill="#a8a8a8"/><rect x="1310" y="107.2" width="1" height="1" fill="#a8a8a8"/><rect x="1313" y="107.2" width="1" height="1" fill="#a8a8a8"/><rect x="1310" y="110.4" width="1" height="1" fill="#a8a8a8"/><rect x="1313" y="110.4" width="1" height="1" fill="#a8a8a8"/><rect x="1310" y="113.6" width="1" height="1" fill="#a8a8a8"/><rect x="1313" y="113.6" width="1" height="1" fill="#a8a8a8"/><rect x="1310" y="116.8" width="1" height="1" fill="#a8a8a8"/><rect x="1313" y="116.8" width="1" height="1" fill="#a8a8a8"/><rect x="1310" y="120.0" width="1" height="1" fill="#a8a8a8"/><rect x="1313" y="120.0" width="1" height="1" fill="#a8a8a8"/><path d="M1327,111 l8,8 c4,4 10,2 11,-3 c1,-4 -1,-7 -3,-9 l-7,-7 -4,4 7,7 c1,1 1,3 0,4 c-1,1 -3,1 -4,0 l-7,-7 z" fill="#d21a1a" stroke="#8a0a0a" stroke-width="0.6"/><path d="M1327,111 l4,-4 2,2 -4,4z M1339,103 l-4,4 -2,-2 4,-4 z" fill="#fff"/><path d="M1370,123 v-10 l-7,-7 M1370,113 l8,-6 M1370,116 l6,2" stroke="#d8d8d4" stroke-width="1.5" fill="none"/><circle cx="1363" cy="104" r="2" fill="none" stroke="#ddd"/><circle cx="1378" cy="106" r="2" fill="none" stroke="#ddd"/><path d="M1374,119 h9 l-4.5,4.5 z" fill="#aaa"/><rect x="1394" y="104" width="3" height="3" fill="none" stroke="#ccc" stroke-width="0.8"/><rect x="1406" y="107" width="3" height="3" fill="none" stroke="#ccc" stroke-width="0.8"/><rect x="1400" y="117" width="3" height="3" fill="none" stroke="#ccc" stroke-width="0.8"/><path d="M1406,119 h9 l-4.5,4.5 z" fill="#aaa"/><path d="M1586,102 l4,9 v12 M1590,111 l10,-3" stroke="#6aaa6a" stroke-width="1.8" fill="none"/><rect x="1587" y="109" width="4" height="4" fill="#aaa" stroke="#555" stroke-width="0.6"/><path d="M1612,102 l21,21 M1633,102 l-21,21" stroke="#dcdcda" stroke-width="1.6"/><path d="M1645,123 l21,-21" stroke="#dcdcda" stroke-width="1.6"/><path d="M1648,104 l8,6 8,-1 -3,10 -8,-5 z" fill="#d6d3c6"/><path d="M1674,110 h9 l-4.5,4.5 z" fill="#777"/><path d="M1495,108 l4,-4 4,4z M1495,114.5 l4,4 4,-4z" fill="#888"/><path d="M1552,110 h10 l-5,5z" fill="#888"/><rect x="304.5" y="136.5" width="10" height="10" rx="2" fill="none" stroke="#6a6a6a"/><rect x="306.5" y="140.5" width="4" height="4" fill="none" stroke="#6a6a6a"/><path d="M308.5,140.5 v-2 h4 v4 h-2" fill="none" stroke="#6a6a6a"/><rect x="318.5" y="136.5" width="10" height="10" rx="2" fill="none" stroke="#6a6a6a"/><path d="M320.5,138.5 l6,6 M326.5,138.5 l-6,6" stroke="#6a6a6a" stroke-width="1.8"/><path d="M64,168 l4,-4 5,3 -3,5z" fill="#e34"/><path d="M66,166 l4,-4 5,3 -3,5z" fill="#f5c431"/><path d="M68,164 l2,-2 5,3 -2,2z" fill="#5a8fd0"/><path d="M72,167 l7,-7" stroke="#c9862a" stroke-width="2.5"/><rect x="89.5" y="160.5" width="9" height="12" fill="none" stroke="#666"/><rect x="92.5" y="157.5" width="8" height="12" fill="#fff" stroke="#666"/><circle cx="100" cy="171" r="2.6" fill="#5aa55a"/><path d="M113,165 q9,-8 18,0 q-9,7 -18,0z" fill="#eee" stroke="#666" stroke-width="0.8"/><circle cx="121" cy="165" r="2.2" fill="#234"/><path d="M124,168 h8 l-4,4z" fill="#333"/><path d="M139,159 h14 l-5,7 v8 l-4,-2 v-6 z" fill="#5a8fd0"/><path d="M139,159 h14 l-1,2 h-12z" fill="#f5e04a"/><text x="164" y="171" font-family="Liberation Serif" font-size="13" fill="#ccc">ε</text><rect x="172" y="168" width="6" height="6" fill="#ddd"/><path d="M185,164 h9 l-4.5,4.5 z" fill="#aaa"/><rect x="203" y="160" width="5" height="13" fill="none" stroke="#888" stroke-width="0.6"/><rect x="204" y="163" width="2.5" height="2.5" fill="#f39c12"/><rect x="204" y="168" width="2.5" height="2.5" fill="#f39c12"/><path d="M213,158 v12 M209,166 l4,5 4,-5" stroke="#4a7ec0" stroke-width="2.6" fill="none"/><rect x="228" y="160" width="5" height="13" fill="none" stroke="#888" stroke-width="0.6"/><rect x="229" y="163" width="2.5" height="2.5" fill="#f39c12"/><rect x="229" y="168" width="2.5" height="2.5" fill="#f39c12"/><path d="M238,174 v-12 M234,163 l4,-5 4,5" stroke="#4a7ec0" stroke-width="2.6" fill="none"/><rect x="254.5" y="159.5" width="11" height="11" fill="none" stroke="#555"/><rect x="262" y="169" width="6" height="4" rx="1" fill="#e23"/><path d="M263,171 h4" stroke="#fff"/><rect x="84.5" y="186.5" width="15" height="15" fill="#fff" stroke="#8a8a8a"/><path d="M88,194 l3,4 5,-8" fill="none" stroke="#000" stroke-width="1.8"/><rect x="107.5" y="186.5" width="16" height="16" fill="#b5474b" stroke="#444"/><rect x="186.0" y="530" width="1" height="1" fill="#a8a8a8"/><rect x="189.2" y="530" width="1" height="1" fill="#a8a8a8"/><rect x="192.4" y="530" width="1" height="1" fill="#a8a8a8"/><rect x="195.6" y="530" width="1" height="1" fill="#a8a8a8"/><rect x="198.8" y="530" width="1" height="1" fill="#a8a8a8"/><rect x="202.0" y="530" width="1" height="1" fill="#a8a8a8"/><rect x="304.5" y="537.5" width="10" height="10" rx="2" fill="none" stroke="#6a6a6a"/><rect x="306.5" y="541.5" width="4" height="4" fill="none" stroke="#6a6a6a"/><path d="M308.5,541.5 v-2 h4 v4 h-2" fill="none" stroke="#6a6a6a"/><rect x="318.5" y="537.5" width="10" height="10" rx="2" fill="none" stroke="#6a6a6a"/><path d="M320.5,539.5 l6,6 M326.5,539.5 l-6,6" stroke="#6a6a6a" stroke-width="1.8"/><rect x="63.5" y="560.5" width="11" height="11" fill="none" stroke="#555"/><circle cx="74" cy="571" r="3" fill="#5aa55a"/><path d="M89,566 a7,6 0 0 1 12,-3" fill="none" stroke="#3f86d4" stroke-width="2.6"/><path d="M103,559 v6 h-6z" fill="#3f86d4"/><path d="M102,567 a7,6 0 0 1 -12,3" fill="none" stroke="#3f86d4" stroke-width="2.6"/><path d="M88,575 v-6 h6z" fill="#3f86d4"/><path d="M114,560 h14 l-5,7 v8 l-4,-2 v-6 z" fill="#5a8fd0"/><path d="M114,560 h14 l-1,2 h-12z" fill="#f5e04a"/><rect x="139" y="562" width="5" height="13" fill="none" stroke="#888" stroke-width="0.6"/><rect x="140" y="565" width="2.5" height="2.5" fill="#f39c12"/><rect x="140" y="570" width="2.5" height="2.5" fill="#f39c12"/><path d="M148,575 v-12 M144,564 l4,-5 4,5" stroke="#4a7ec0" stroke-width="2.6" fill="none"/><circle cx="171" cy="567" r="7" fill="#5a8fd0"/><text x="169" y="571.5" font-family="Liberation Serif" font-style="italic" font-weight="bold" font-size="10" fill="#fff">i</text><path d="M66,612 l5,5 -5,5z" fill="#333"/><path d="M66,634 l5,5 -5,5z" fill="#333"/><path d="M66,656 l5,5 -5,5z" fill="#333"/><path d="M66,678 l5,5 -5,5z" fill="#333"/><path d="M66,700 l5,5 -5,5z" fill="#333"/><path d="M66,722 l5,5 -5,5z" fill="#333"/><path d="M66,744 l5,5 -5,5z" fill="#333"/><path d="M66,766 l5,5 -5,5z" fill="#333"/><path d="M66,876 l5,5 -5,5z" fill="#333"/><path d="M66,898 l5,5 -5,5z" fill="#333"/><path d="M66,920 l5,5 -5,5z" fill="#333"/><path d="M66,942 l5,5 -5,5z" fill="#333"/><path d="M93.5,586 l2.6,6 6.5,0.5 -5,4.2 1.6,6.3 -5.7,-3.5 -5.7,3.5 1.6,-6.3 -5,-4.2 6.5,-0.5z" fill="#f7e94a" stroke="#c9a800" stroke-width="0.9"/><path d="M85,609 h7 l2,2 h8 v14 h-17z" fill="#96d36e" stroke="#555" stroke-width="0.8"/><path d="M88,612 l8,8 5,-5" stroke="#fff" stroke-width="1.4" fill="none"/><path d="M94,616 l4,-3 3,3 -3,4z" fill="#2a9a2a"/><path d="M85.5,631.5 h6 l2,2 h8 v13 h-16z" fill="#ececec" stroke="#666"/><path d="M89,641 l4.5,-4 4.5,4 M90,640 v4 h7 v-4" fill="none" stroke="#333" stroke-width="0.9"/><path d="M85.5,652.5 h6 l2,2 h8 v13 h-16z" fill="#ececec" stroke="#666"/><path d="M85.5,674.5 h6 l2,2 h8 v13 h-16z" fill="#ececec" stroke="#666"/><path d="M85.5,696.5 h6 l2,2 h8 v13 h-16z" fill="#ececec" stroke="#666"/><path d="M85,724 l8,-3 8,3 v8 l-8,3 -8,-3z" fill="#e8c21a" stroke="#554400" stroke-width="0.8"/><circle cx="93" cy="721" r="5" fill="#7fa5d6" stroke="#4a6e9e" stroke-width="0.6"/><path d="M93,727 l8,-3 v8 l-8,3z" fill="#f7e86a"/><path d="M85,759 c3,-8 8,-16 17,-18 c-2,6 -6,13 -15,16 z" fill="#8fb0dc" stroke="#4a6e9e" stroke-width="0.7"/><path d="M86,765 c3,-3 12,-3 15,0 c2,3 1,7 -2,9 l-1,5 h-3 l-1,-4 -2,0 -1,4 h-3 l-1,-5 c-3,-2 -3,-6 -1,-9z" fill="#6b99cd" stroke="#3a5f94" stroke-width="0.7"/><path d="M85,803 c2,-4 3,-12 2,-17 c6,0 13,3 15,7 c-4,3 -10,6 -17,10z" fill="#6b99cd" stroke="#3a5f94" stroke-width="0.7"/><rect x="84.5" y="809.5" width="19" height="12" rx="5" fill="#6b99cd" stroke="#2f4f7a" stroke-width="1.3"/><rect x="84" y="828" width="19" height="19" rx="2" fill="#7ea1cc"/><text x="86" y="841" font-family="Liberation Sans" font-size="7" fill="#fff">DB2</text><circle cx="93.5" cy="859" r="9" fill="#a9c3e6" stroke="#3a5f94" stroke-width="0.9"/><path d="M84.5,859 h18 M93.5,850 v18 M86,854.5 h15 M86,863.5 h15" stroke="#fff" stroke-width="0.6"/><ellipse cx="93.5" cy="859" rx="4" ry="9" fill="none" stroke="#fff" stroke-width="0.6"/><path d="M88,854 c2,-1 4,1 3,3 c-1,2 -2,5 -1,7 c-2,-2 -3,-6 -2,-10z M95,853 c2,0 5,1 5,3 c-1,1 -3,0 -4,2 c0,2 2,3 2,6 c-2,-2 -4,-3 -4,-6z" fill="#2b3f5c"/><circle cx="93.5" cy="881" r="9" fill="#a9c3e6" stroke="#3a5f94" stroke-width="0.9"/><path d="M84.5,881 h18 M93.5,872 v18 M86,876.5 h15 M86,885.5 h15" stroke="#fff" stroke-width="0.6"/><ellipse cx="93.5" cy="881" rx="4" ry="9" fill="none" stroke="#fff" stroke-width="0.6"/><path d="M88,876 c2,-1 4,1 3,3 c-1,2 -2,5 -1,7 c-2,-2 -3,-6 -2,-10z M95,875 c2,0 5,1 5,3 c-1,1 -3,0 -4,2 c0,2 2,3 2,6 c-2,-2 -4,-3 -4,-6z" fill="#2b3f5c"/><circle cx="93.5" cy="903" r="9" fill="#2f4f7a"/><path d="M84.5,903 h18 M86,898.5 h15 M86,907.5 h15" stroke="#fff" stroke-width="1.2"/><ellipse cx="93.5" cy="903" rx="4" ry="9" fill="none" stroke="#fff" stroke-width="1"/><circle cx="93.5" cy="925" r="9" fill="#e8f0fa" stroke="#3a5f94" stroke-width="0.9"/><path d="M84.5,925 h18 M86,920.5 h15 M86,929.5 h15" stroke="#8fb0dc" stroke-width="0.7"/><path d="M88,918 l4,12 4,-10 3,2" fill="none" stroke="#234" stroke-width="1"/><circle cx="93.5" cy="947" r="9" fill="#f0f5fb" stroke="#3a5f94" stroke-width="0.9"/><path d="M84.5,947 h18 M86,942.5 h15 M86,951.5 h15" stroke="#8fb0dc" stroke-width="0.8"/><ellipse cx="93.5" cy="947" rx="4" ry="9" fill="none" stroke="#8fb0dc" stroke-width="0.8"/><circle cx="93.5" cy="969" r="9" fill="#a9c3e6" stroke="#3a5f94" stroke-width="0.9"/><path d="M84.5,969 h18 M93.5,960 v18 M86,964.5 h15 M86,973.5 h15" stroke="#fff" stroke-width="0.6"/><ellipse cx="93.5" cy="969" rx="4" ry="9" fill="none" stroke="#fff" stroke-width="0.6"/><path d="M88,964 c2,-1 4,1 3,3 c-1,2 -2,5 -1,7 c-2,-2 -3,-6 -2,-10z M95,963 c2,0 5,1 5,3 c-1,1 -3,0 -4,2 c0,2 2,3 2,6 c-2,-2 -4,-3 -4,-6z" fill="#2b3f5c"/><circle cx="93.5" cy="991" r="9" fill="#dbe7f5" stroke="#3a5f94" stroke-width="0.9"/><path d="M84.5,991 h18 M93.5,982 v18 M86,986.5 h15 M86,995.5 h15" stroke="#fff" stroke-width="0.6"/><ellipse cx="93.5" cy="991" rx="4" ry="9" fill="none" stroke="#fff" stroke-width="0.6"/><path d="M88,986 c2,-1 4,1 3,3 c-1,2 -2,5 -1,7 c-2,-2 -3,-6 -2,-10z M95,985 c2,0 5,1 5,3 c-1,1 -3,0 -4,2 c0,2 2,3 2,6 c-2,-2 -4,-3 -4,-6z" fill="#2b3f5c"/><g stroke="#4a80c8" stroke-width="3" stroke-linecap="round"><path d="M93.5,1005 v16 M85.5,1013 h16 M87.8,1007.3 l11.4,11.4 M87.8,1018.7 l11.4,-11.4"/></g><circle cx="93.5" cy="1013" r="2.5" fill="#fff"/><circle cx="19.5" cy="1063" r="4" fill="none" stroke="#666" stroke-width="1.2"/><path d="M22.5,1066 l3.5,3.5" stroke="#666" stroke-width="1.4"/><circle cx="1106" cy="1066" r="5" fill="none" stroke="#222" stroke-width="2"/><circle cx="1106" cy="1066" r="2" fill="#222"/><path d="M1108,1058 l6,-3 M1112,1060 l3,1" stroke="#222" stroke-width="1.5"/><path d="M1240,1061 h9 l-4.5,4.5 z" fill="#444"/><rect x="1273" y="1063" width="13" height="10" rx="1.5" fill="#555"/><path d="M1275.5,1063 v-3 a4,4 0 0 1 8,0 v3" fill="none" stroke="#555" stroke-width="1.8"/><path d="M1507,1062 l4,-4 4,4z M1507,1067 l4,4 4,-4z" fill="#555"/><path d="M1669,1062 l4,-4 4,4z M1669,1067 l4,4 4,-4z" fill="#555"/><rect x="1689.5" y="1056.5" width="14" height="15" fill="#fff" stroke="#8a8a8a"/><path d="M1692,1064 l3,4 5,-9" fill="none" stroke="#000" stroke-width="1.6"/><circle cx="1795" cy="1064" r="7" fill="none" stroke="#666" stroke-width="1.3"/><path d="M1788,1064 h14 M1789,1060.5 h12 M1789,1067.5 h12" stroke="#666" stroke-width="1"/><ellipse cx="1795" cy="1064" rx="3" ry="7" fill="none" stroke="#666" stroke-width="1"/><path d="M1893,1064 a9,7 0 1 1 4,5.5 l-4,3 z" fill="#666"/><circle cx="1898" cy="1063" r="1.3" fill="#fff"/><circle cx="1902" cy="1063" r="1.3" fill="#fff"/><circle cx="1906" cy="1063" r="1.3" fill="#fff"/><rect x="21.0" y="140" width="1" height="1" fill="#a8a8a8"/><rect x="24.2" y="140" width="1" height="1" fill="#a8a8a8"/><rect x="27.4" y="140" width="1" height="1" fill="#a8a8a8"/><rect x="30.6" y="140" width="1" height="1" fill="#a8a8a8"/><rect x="33.8" y="140" width="1" height="1" fill="#a8a8a8"/><rect x="37.0" y="140" width="1" height="1" fill="#a8a8a8"/><path d="M39,190 h9 l-4.5,4.5 z" fill="#b0b0b0"/><path d="M39,704 h9 l-4.5,4.5 z" fill="#b0b0b0"/><path d="M15.5,150.5 l22,23 h-22 z" fill="#e2ddd6" stroke="#c8c2b8"/><path d="M20,163 l6,7 h-6z" fill="#fff" stroke="#c8c2b8" stroke-width="0.8"/><path d="M29,153 l8,-3 v23" fill="#e8e4dc" stroke="#c8c2b8" stroke-width="0.8"/><path d="M10.0,189 c0,-7.0 6.6,-7.0 11.0,-3.5999999999999996 c3.3,1.2000000000000002 9.9,-6.0 11.0,1.2000000000000002 c0,4.800000000000001 -4.4,6.0 -8.8,5.4 c-4.4,0 -6.6,4.800000000000001 -9.9,1.7999999999999998 c-2.2,-1.2000000000000002 -3.3,-2.4000000000000004 -3.3,-4.800000000000001z" fill="#dcdcd8" stroke="#c9c9c4" stroke-width="0.8"/><rect x="21" y="197" width="10" height="10" rx="1.5" fill="#cbcac4"/><path d="M22.5,201.5 h5 M25.5,199 l2.5,2.5 -2.5,2.5" stroke="#fff" stroke-width="1.4" fill="none"/><path d="M16.0,221 c0,-6.5 6.0,-6.5 10.0,-3.3 c3.0,1.1 9.0,-5.5 10.0,1.1 c0,4.4 -4.0,5.5 -8.0,4.95 c-4.0,0 -6.0,4.4 -9.0,1.65 c-2.0,-1.1 -3.0,-2.2 -3.0,-4.4z" fill="#dcdcd8" stroke="#c9c9c4" stroke-width="0.8"/><rect x="28" y="229" width="10" height="10" rx="1.5" fill="#cbcac4"/><circle cx="32.5" cy="233.5" r="2.5" fill="none" stroke="#fff" stroke-width="1.1"/><circle cx="24" cy="254" r="7" fill="#dcdcd8" stroke="#c9c9c4" stroke-width="0.8"/><path d="M32,252 l6,3 v7 l-6,3 -6,-3 v-7z" fill="#e4e4e4" stroke="#c9c9c4" stroke-width="0.8"/><path d="M16.0,285 c0,-6.5 6.0,-6.5 10.0,-3.3 c3.0,1.1 9.0,-5.5 10.0,1.1 c0,4.4 -4.0,5.5 -8.0,4.95 c-4.0,0 -6.0,4.4 -9.0,1.65 c-2.0,-1.1 -3.0,-2.2 -3.0,-4.4z" fill="#dcdcd8" stroke="#c9c9c4" stroke-width="0.8"/><rect x="28" y="293" width="10" height="10" rx="1.5" fill="#cbcac4"/><path d="M32.5,294.5 v6 M29.5,297.5 h6" stroke="#fff" stroke-width="1"/><path d="M16.0,317 c0,-6.5 6.0,-6.5 10.0,-3.3 c3.0,1.1 9.0,-5.5 10.0,1.1 c0,4.4 -4.0,5.5 -8.0,4.95 c-4.0,0 -6.0,4.4 -9.0,1.65 c-2.0,-1.1 -3.0,-2.2 -3.0,-4.4z" fill="#dcdcd8" stroke="#c9c9c4" stroke-width="0.8"/><rect x="28" y="325" width="10" height="10" rx="1.5" fill="#cbcac4"/><path d="M32.5,326.5 v6 M29.5,329.5 h6" stroke="#fff" stroke-width="1"/><path d="M16.0,349 c0,-6.5 6.0,-6.5 10.0,-3.3 c3.0,1.1 9.0,-5.5 10.0,1.1 c0,4.4 -4.0,5.5 -8.0,4.95 c-4.0,0 -6.0,4.4 -9.0,1.65 c-2.0,-1.1 -3.0,-2.2 -3.0,-4.4z" fill="#dcdcd8" stroke="#c9c9c4" stroke-width="0.8"/><rect x="28" y="357" width="10" height="10" rx="1.5" fill="#cbcac4"/><path d="M32.5,358.5 v6 M29.5,361.5 h6" stroke="#fff" stroke-width="1"/><path d="M16.0,381 c0,-6.5 6.0,-6.5 10.0,-3.3 c3.0,1.1 9.0,-5.5 10.0,1.1 c0,4.4 -4.0,5.5 -8.0,4.95 c-4.0,0 -6.0,4.4 -9.0,1.65 c-2.0,-1.1 -3.0,-2.2 -3.0,-4.4z" fill="#dcdcd8" stroke="#c9c9c4" stroke-width="0.8"/><rect x="28" y="389" width="10" height="10" rx="1.5" fill="#ddd3d3"/><path d="M30,391 l5,5 M35,391 l-5,5" stroke="#fff" stroke-width="1.4"/><path d="M16.0,413 c0,-6.5 6.0,-6.5 10.0,-3.3 c3.0,1.1 9.0,-5.5 10.0,1.1 c0,4.4 -4.0,5.5 -8.0,4.95 c-4.0,0 -6.0,4.4 -9.0,1.65 c-2.0,-1.1 -3.0,-2.2 -3.0,-4.4z" fill="#dcdcd8" stroke="#c9c9c4" stroke-width="0.8"/><rect x="28" y="421" width="10" height="10" rx="1.5" fill="#ddd3d3"/><path d="M30,423 l5,5 M35,423 l-5,5" stroke="#fff" stroke-width="1.4"/><path d="M16.0,445 c0,-7.5 6.0,-7.5 10.0,-3.9 c3.0,1.3 9.0,-6.5 10.0,1.3 c0,5.2 -4.0,6.5 -8.0,5.8500000000000005 c-4.0,0 -6.0,5.2 -9.0,1.95 c-2.0,-1.3 -3.0,-2.6 -3.0,-5.2z" fill="#dcdcd8" stroke="#c9c9c4" stroke-width="0.8"/><path d="M17,447 c0,-6 5,-10 10,-12 c5,-2 9,1 9,4 c0,3 -3,5 -6,8 c-3,3 -5,7 -9,7 c-3,0 -4,-3 -4,-7z" fill="#dcdcd8" stroke="#c9c9c4" stroke-width="1.2"/><path d="M17,480 c0,-6 5,-10 10,-12 c5,-2 9,1 9,4 c0,3 -3,5 -6,8 c-3,3 -5,7 -9,7 c-3,0 -4,-3 -4,-7z" fill="#e2e2de" stroke="#c9c9c4" stroke-width="1.5"/><path d="M17,503 l7,11 3,-9 h9" fill="none" stroke="#c9c9c4" stroke-width="0.9"/><rect x="28" y="519" width="10" height="10" rx="1.5" fill="#cbcac4"/><circle cx="32.5" cy="523.5" r="2.5" fill="none" stroke="#fff" stroke-width="1.1"/><path d="M26,535 v22 M16,546 h20" stroke="#c9c9c4" stroke-width="0.9"/><circle cx="26" cy="546" r="2" fill="none" stroke="#c9c9c4"/><rect x="31" y="537" width="10" height="10" rx="1.5" fill="#cbcac4"/><path d="M35.5,538.5 v6 M32.5,541.5 h6" stroke="#fff" stroke-width="1"/><rect x="16" y="553" width="10" height="10" rx="1.5" fill="#ddd3d3"/><path d="M18,555 l5,5 M23,555 l-5,5" stroke="#fff" stroke-width="1.4"/><path d="M17,574 c0,-4 3,-6 6,-6 c3,0 4,3 3,6 c-1,3 -4,5 -6,5 c-2,0 -3,-2 -3,-5z M27,570 c1,-2 5,-2 7,0 c2,2 0,7 -3,8 c-2,0 -4,-4 -4,-8z" fill="#dcdcd8" stroke="#c9c9c4" stroke-width="0.8" transform="translate(0,0)"/><circle cx="22" cy="584" r="2.5" fill="none" stroke="#d8b8b8" stroke-width="1.2"/><circle cx="31" cy="584" r="2.5" fill="none" stroke="#d8b8b8" stroke-width="1.2"/><path d="M17,574 c0,-4 3,-6 6,-6 c3,0 4,3 3,6 c-1,3 -4,5 -6,5 c-2,0 -3,-2 -3,-5z M27,570 c1,-2 5,-2 7,0 c2,2 0,7 -3,8 c-2,0 -4,-4 -4,-8z" fill="#dcdcd8" stroke="#c9c9c4" stroke-width="0.8" transform="translate(0,32)"/><circle cx="22" cy="616" r="2.5" fill="none" stroke="#d8b8b8" stroke-width="1.2"/><circle cx="31" cy="616" r="2.5" fill="none" stroke="#d8b8b8" stroke-width="1.2"/><path d="M17,636 c0,-4 3,-6 6,-6 c3,0 4,3 3,6 c-1,3 -4,5 -6,5 c-2,0 -3,-2 -3,-5z M27,632 c1,-2 5,-2 7,0 c2,2 0,7 -3,8 c-2,0 -4,-4 -4,-8z" fill="#dcdcd8" stroke="#c9c9c4" stroke-width="0.8"/><path d="M21,641 c0,4 3,6 7,9" fill="none" stroke="#c9c9c4"/><path d="M17,665 h20 M17,672 h20 M17,679 h20 M27,661 v22" stroke="#c9c9c4" stroke-width="0.9"/><path d="M26,697 l7,5 -7,4z" fill="#e2e2de" stroke="#c9c9c4" stroke-width="0.8"/><path d="M26,697 v12 l-5,8 h10z" fill="none" stroke="#c9c9c4" stroke-width="0.8"/><path d="M20,713 a7,7 0 0 1 3,-14" fill="none" stroke="#c9c9c4"/></svg>
</body></html>
